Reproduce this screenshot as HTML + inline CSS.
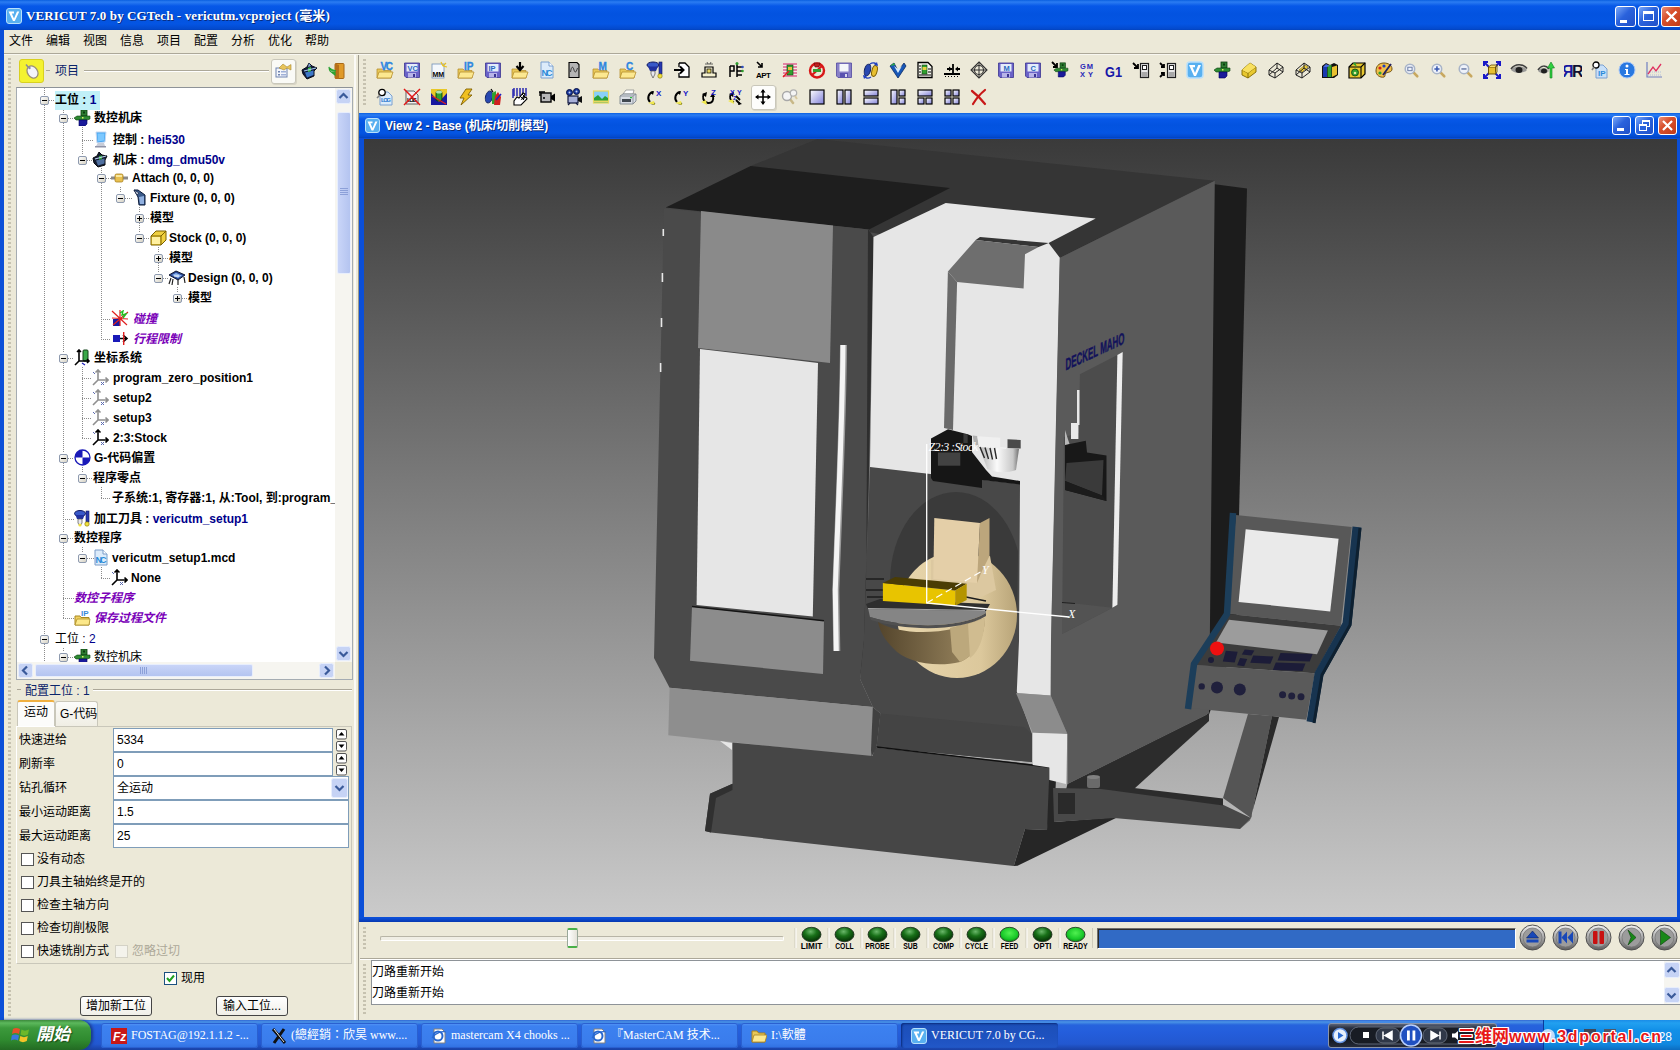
<!DOCTYPE html><html><head><meta charset="utf-8"><title>VERICUT 7.0 by CGTech</title><style>
*{box-sizing:border-box;margin:0;padding:0}
html,body{width:1680px;height:1050px;overflow:hidden;background:#ECE9D8}
body{position:relative;font-family:"Liberation Sans","Noto Sans CJK SC",sans-serif;font-size:12px;color:#000}
.a{position:absolute}
.t{position:absolute;white-space:nowrap;line-height:16px;height:16px}
.b{font-weight:bold}
.navy{color:#00008B}
.pur{color:#7A00B8;font-style:italic;font-weight:bold}
</style></head><body>
<div class="a" style="left:0;top:0;width:1680px;height:30px;background:linear-gradient(#0A5FE0 0,#2B7CF2 2px,#0758E8 6px,#0353E0 14px,#0455E3 24px,#0349CC 29px,#0242BB 30px)"></div>
<div class="a" style="left:0;top:30px;width:4px;height:990px;background:#0B4FD8"></div>
<svg class="a" style="left:6px;top:8px" width="16" height="16" viewBox="0 0 16 16"><rect x=".5" y=".5" width="15" height="15" rx="2.500" fill="#58B0F0" stroke="#B8E0FC"/><path d="M2.500 3.500 H8 V5.500 H5.800 L8 10.500 L11 3.500 H13.300 L8.800 13 H7Z" fill="#fff"/></svg>
<div class="t b" style="left:26px;top:8px;color:#fff;font-family:'Liberation Serif','Noto Sans CJK SC',serif;font-size:13px;letter-spacing:.11px;text-shadow:1px 1px 0 #0A2A7A">VERICUT 7.0 by CGTech - vericutm.vcproject (毫米)</div>
<div class="t" style="left:9px;top:33px">文件</div>
<div class="t" style="left:46px;top:33px">编辑</div>
<div class="t" style="left:83px;top:33px">视图</div>
<div class="t" style="left:120px;top:33px">信息</div>
<div class="t" style="left:157px;top:33px">项目</div>
<div class="t" style="left:194px;top:33px">配置</div>
<div class="t" style="left:231px;top:33px">分析</div>
<div class="t" style="left:268px;top:33px">优化</div>
<div class="t" style="left:305px;top:33px">帮助</div>
<div class="a" style="left:4px;top:53px;width:1676px;height:1px;background:#ACA899"></div>
<div class="a" style="left:4px;top:54px;width:1676px;height:1px;background:#F8F7F0"></div>
<div class="a" style="left:8px;top:58px;width:3px;height:958px;background:repeating-linear-gradient(#C6C2B0 0 2px,transparent 2px 4px)"></div>
<div class="a" style="left:19px;top:59px;width:25px;height:24px;background:#F4F230;border:1px solid #D8D020;border-radius:3px"></div>
<svg class="a" style="left:22px;top:61px" width="20" height="20" viewBox="0 0 20 20"><ellipse cx="10.5" cy="11" rx="5" ry="6.5" transform="rotate(-35 10.5 11)" fill="#F4F4FA" stroke="#9A8F78" stroke-width="1.3"/><path d="M6.5 6.5 L4 3.5" stroke="#8A8A9A" stroke-width="1.5" fill="none"/><circle cx="7.5" cy="7" r="1.2" fill="#8A8AB0"/></svg>
<div class="a" style="left:46px;top:70px;width:4px;height:1px;background:#ACA899"></div>
<div class="t" style="left:55px;top:63px;color:#0A246A">项目</div>
<div class="a" style="left:84px;top:70px;width:185px;height:1px;background:#ACA899"></div>
<div class="a" style="left:84px;top:71px;width:185px;height:1px;background:#fff"></div>
<div class="a" style="left:271px;top:59px;width:25px;height:25px;background:#FAFAF6;border:1px solid #C9C7BA;border-radius:3px;box-shadow:1px 1px 0 #D8D5C5"></div>
<svg class="a" style="left:275px;top:63px" width="18" height="16" viewBox="0 0 18 16"><rect x="1" y="5" width="11" height="9" fill="#F4F6FB" stroke="#6F83B0"/><rect x="3" y="8" width="2" height="1.5" fill="#6F83B0"/><rect x="6" y="8" width="5" height="1.5" fill="#9FB0D8"/><rect x="3" y="11" width="2" height="1.5" fill="#6F83B0"/><rect x="6" y="11" width="5" height="1.5" fill="#9FB0D8"/><path d="M4 5 L8 1 L12 4 L16 1.5 L16 7 L12 5 L9 7Z" fill="#E8C45A" stroke="#A88A30" stroke-width=".6"/></svg>
<svg class="a" style="left:301px;top:62px" width="18" height="18" viewBox="0 0 18 18"><path d="M1 8 L6 5 L8 1 L11 4 L16 6 L13 9 L13 14 L6 17 L2 12Z" fill="#101C3C" stroke="#050A18"/><path d="M4 10.500 L12.500 8.500 L12.500 13 L6 15.500Z" fill="#3E78C8"/><path d="M7 6 L10 5 L10 9 L7 10Z" fill="#3CC040"/><path d="M8 1 L10 4 L7 5Z" fill="#88A8D8"/><path d="M3 9 L15 6" stroke="#A8C8F0" stroke-width="1.2"/></svg>
<svg class="a" style="left:328px;top:62px" width="18" height="18" viewBox="0 0 18 18"><rect x="7" y="1.5" width="9" height="15" rx="1" fill="#E09A28" stroke="#A86818"/><path d="M7 1.5 L11 3 L11 17 L7 16.5Z" fill="#B87018"/><path d="M1 5 C1 10 4 11 7 10 L7 13 L2 9Z M2 6 C3 9 5 9.5 8 8.5" fill="#3CC040" stroke="#28A030" stroke-width="1.2"/></svg>
<div class="a" style="left:16px;top:87px;width:337px;height:593px;background:#fff;border:1px solid #A5ACB2;border-top-color:#8E9398"></div>
<div class="a" style="left:17px;top:88px;width:318px;height:574px;overflow:hidden" id="tree">
<div class="a" style="left:27px;top:0px;width:1px;height:7px;background:repeating-linear-gradient(#8C8C8C 0 1px,transparent 1px 2px)"></div><div class="a" style="left:27px;top:17px;width:1px;height:529px;background:repeating-linear-gradient(#8C8C8C 0 1px,transparent 1px 2px)"></div><div class="a" style="left:27px;top:556px;width:1px;height:18px;background:repeating-linear-gradient(#8C8C8C 0 1px,transparent 1px 2px)"></div><div class="a" style="left:32px;top:12px;width:6px;height:1px;background:repeating-linear-gradient(90deg,#8C8C8C 0 1px,transparent 1px 2px)"></div><div class="a" style="left:46px;top:20px;width:1px;height:5px;background:repeating-linear-gradient(#8C8C8C 0 1px,transparent 1px 2px)"></div><div class="a" style="left:46px;top:35px;width:1px;height:230px;background:repeating-linear-gradient(#8C8C8C 0 1px,transparent 1px 2px)"></div><div class="a" style="left:46px;top:275px;width:1px;height:90px;background:repeating-linear-gradient(#8C8C8C 0 1px,transparent 1px 2px)"></div><div class="a" style="left:46px;top:375px;width:1px;height:70px;background:repeating-linear-gradient(#8C8C8C 0 1px,transparent 1px 2px)"></div><div class="a" style="left:46px;top:455px;width:1px;height:76px;background:repeating-linear-gradient(#8C8C8C 0 1px,transparent 1px 2px)"></div><div class="a" style="left:46px;top:560px;width:1px;height:4px;background:repeating-linear-gradient(#8C8C8C 0 1px,transparent 1px 2px)"></div><div class="a" style="left:51px;top:30px;width:6px;height:1px;background:repeating-linear-gradient(90deg,#8C8C8C 0 1px,transparent 1px 2px)"></div><div class="a" style="left:51px;top:270px;width:6px;height:1px;background:repeating-linear-gradient(90deg,#8C8C8C 0 1px,transparent 1px 2px)"></div><div class="a" style="left:51px;top:370px;width:6px;height:1px;background:repeating-linear-gradient(90deg,#8C8C8C 0 1px,transparent 1px 2px)"></div><div class="a" style="left:51px;top:450px;width:6px;height:1px;background:repeating-linear-gradient(90deg,#8C8C8C 0 1px,transparent 1px 2px)"></div><div class="a" style="left:51px;top:569px;width:6px;height:1px;background:repeating-linear-gradient(90deg,#8C8C8C 0 1px,transparent 1px 2px)"></div><div class="a" style="left:46px;top:431px;width:11px;height:1px;background:repeating-linear-gradient(90deg,#8C8C8C 0 1px,transparent 1px 2px)"></div><div class="a" style="left:46px;top:510px;width:11px;height:1px;background:repeating-linear-gradient(90deg,#8C8C8C 0 1px,transparent 1px 2px)"></div><div class="a" style="left:46px;top:530px;width:11px;height:1px;background:repeating-linear-gradient(90deg,#8C8C8C 0 1px,transparent 1px 2px)"></div><div class="a" style="left:65px;top:39px;width:1px;height:27px;background:repeating-linear-gradient(#8C8C8C 0 1px,transparent 1px 2px)"></div><div class="a" style="left:65px;top:52px;width:11px;height:1px;background:repeating-linear-gradient(90deg,#8C8C8C 0 1px,transparent 1px 2px)"></div><div class="a" style="left:70px;top:72px;width:6px;height:1px;background:repeating-linear-gradient(90deg,#8C8C8C 0 1px,transparent 1px 2px)"></div><div class="a" style="left:84px;top:80px;width:1px;height:5px;background:repeating-linear-gradient(#8C8C8C 0 1px,transparent 1px 2px)"></div><div class="a" style="left:84px;top:95px;width:1px;height:156px;background:repeating-linear-gradient(#8C8C8C 0 1px,transparent 1px 2px)"></div><div class="a" style="left:89px;top:90px;width:5px;height:1px;background:repeating-linear-gradient(90deg,#8C8C8C 0 1px,transparent 1px 2px)"></div><div class="a" style="left:84px;top:231px;width:10px;height:1px;background:repeating-linear-gradient(90deg,#8C8C8C 0 1px,transparent 1px 2px)"></div><div class="a" style="left:84px;top:251px;width:10px;height:1px;background:repeating-linear-gradient(90deg,#8C8C8C 0 1px,transparent 1px 2px)"></div><div class="a" style="left:103px;top:99px;width:1px;height:6px;background:repeating-linear-gradient(#8C8C8C 0 1px,transparent 1px 2px)"></div><div class="a" style="left:108px;top:110px;width:8px;height:1px;background:repeating-linear-gradient(90deg,#8C8C8C 0 1px,transparent 1px 2px)"></div><div class="a" style="left:122px;top:119px;width:1px;height:6px;background:repeating-linear-gradient(#8C8C8C 0 1px,transparent 1px 2px)"></div><div class="a" style="left:122px;top:135px;width:1px;height:10px;background:repeating-linear-gradient(#8C8C8C 0 1px,transparent 1px 2px)"></div><div class="a" style="left:127px;top:130px;width:6px;height:1px;background:repeating-linear-gradient(90deg,#8C8C8C 0 1px,transparent 1px 2px)"></div><div class="a" style="left:127px;top:150px;width:6px;height:1px;background:repeating-linear-gradient(90deg,#8C8C8C 0 1px,transparent 1px 2px)"></div><div class="a" style="left:141px;top:159px;width:1px;height:6px;background:repeating-linear-gradient(#8C8C8C 0 1px,transparent 1px 2px)"></div><div class="a" style="left:141px;top:175px;width:1px;height:10px;background:repeating-linear-gradient(#8C8C8C 0 1px,transparent 1px 2px)"></div><div class="a" style="left:146px;top:170px;width:6px;height:1px;background:repeating-linear-gradient(90deg,#8C8C8C 0 1px,transparent 1px 2px)"></div><div class="a" style="left:146px;top:190px;width:5px;height:1px;background:repeating-linear-gradient(90deg,#8C8C8C 0 1px,transparent 1px 2px)"></div><div class="a" style="left:160px;top:199px;width:1px;height:6px;background:repeating-linear-gradient(#8C8C8C 0 1px,transparent 1px 2px)"></div><div class="a" style="left:165px;top:210px;width:6px;height:1px;background:repeating-linear-gradient(90deg,#8C8C8C 0 1px,transparent 1px 2px)"></div><div class="a" style="left:65px;top:279px;width:1px;height:72px;background:repeating-linear-gradient(#8C8C8C 0 1px,transparent 1px 2px)"></div><div class="a" style="left:65px;top:290px;width:10px;height:1px;background:repeating-linear-gradient(90deg,#8C8C8C 0 1px,transparent 1px 2px)"></div><div class="a" style="left:65px;top:310px;width:10px;height:1px;background:repeating-linear-gradient(90deg,#8C8C8C 0 1px,transparent 1px 2px)"></div><div class="a" style="left:65px;top:330px;width:10px;height:1px;background:repeating-linear-gradient(90deg,#8C8C8C 0 1px,transparent 1px 2px)"></div><div class="a" style="left:65px;top:350px;width:10px;height:1px;background:repeating-linear-gradient(90deg,#8C8C8C 0 1px,transparent 1px 2px)"></div><div class="a" style="left:65px;top:379px;width:1px;height:6px;background:repeating-linear-gradient(#8C8C8C 0 1px,transparent 1px 2px)"></div><div class="a" style="left:70px;top:390px;width:6px;height:1px;background:repeating-linear-gradient(90deg,#8C8C8C 0 1px,transparent 1px 2px)"></div><div class="a" style="left:84px;top:399px;width:1px;height:12px;background:repeating-linear-gradient(#8C8C8C 0 1px,transparent 1px 2px)"></div><div class="a" style="left:84px;top:410px;width:10px;height:1px;background:repeating-linear-gradient(90deg,#8C8C8C 0 1px,transparent 1px 2px)"></div><div class="a" style="left:65px;top:459px;width:1px;height:6px;background:repeating-linear-gradient(#8C8C8C 0 1px,transparent 1px 2px)"></div><div class="a" style="left:70px;top:470px;width:7px;height:1px;background:repeating-linear-gradient(90deg,#8C8C8C 0 1px,transparent 1px 2px)"></div><div class="a" style="left:84px;top:479px;width:1px;height:12px;background:repeating-linear-gradient(#8C8C8C 0 1px,transparent 1px 2px)"></div><div class="a" style="left:84px;top:490px;width:10px;height:1px;background:repeating-linear-gradient(90deg,#8C8C8C 0 1px,transparent 1px 2px)"></div>
<div class="a" style="left:38px;top:3px;width:45px;height:19px;background:#C0F0F8"></div>
<div class="a" style="left:23px;top:8px;width:9px;height:9px;border:1px solid #8E9AAF;border-radius:2px;background:linear-gradient(135deg,#fff,#D6D2C4)"></div><div class="a" style="left:25px;top:12px;width:5px;height:1px;background:#000"></div>
<div class="t" style="left:38px;top:4px"><span class="b">工位 : <span class="navy">1</span></span></div>
<div class="a" style="left:42px;top:26px;width:9px;height:9px;border:1px solid #8E9AAF;border-radius:2px;background:linear-gradient(135deg,#fff,#D6D2C4)"></div><div class="a" style="left:44px;top:30px;width:5px;height:1px;background:#000"></div>
<div class="a" style="left:57px;top:22px;line-height:0"><svg width="17" height="16" viewBox="0 0 17 16"><rect x="7" y="0" width="6" height="6" fill="#2E7D32" stroke="#0B3D0E" stroke-width=".8"/><rect x="9" y="1.5" width="2" height="2" fill="#0B3D0E"/><path d="M0 8 L3 6 L16 6 L16 9 L13 10 L2 10Z" fill="#2E8B32" stroke="#0B3D0E" stroke-width=".6"/><rect x="8" y="7" width="1.5" height="1.5" fill="#D8F060"/><path d="M5 10 L13 10 L13 14 L11 16 L5 16Z" fill="#1A1A9A" stroke="#000060" stroke-width=".6"/></svg></div>
<div class="t" style="left:77px;top:22px"><span class="b">数控机床</span></div>
<div class="a" style="left:76px;top:43px;line-height:0"><svg width="15" height="17" viewBox="0 0 15 17"><path d="M3 1 L13 1 L12 11 L4 12Z" fill="#4AA8F0" stroke="#C8D8F0" stroke-width="1"/><path d="M4.5 2.5 L11.5 2.5 L11 9.5 L5 10.5Z" fill="#7CC8FF"/><path d="M5 12 L11 12 L12 15 L3 15Z" fill="#C8CCD8"/><rect x="2" y="15" width="11" height="1.5" fill="#9094A8"/></svg></div>
<div class="t" style="left:96px;top:44px"><span class="b">控制 : <span class="navy">hei530</span></span></div>
<div class="a" style="left:61px;top:68px;width:9px;height:9px;border:1px solid #8E9AAF;border-radius:2px;background:linear-gradient(135deg,#fff,#D6D2C4)"></div><div class="a" style="left:63px;top:72px;width:5px;height:1px;background:#000"></div>
<div class="a" style="left:75px;top:63px;line-height:0"><svg width="17" height="17" viewBox="0 0 17 17"><path d="M1 7 L5 5 L7 1 L10 4 L15 5 L13 9 L13 14 L6 16 L2 12Z" fill="#141C30" stroke="#05080F"/><path d="M4 9.500 L12.500 7.500 L12.500 12.500 L6 14.500Z" fill="#5070A0"/><path d="M7 5 L10 4.5 L10 8 L7 9Z" fill="#30A038"/><path d="M3 8 L14 5" stroke="#B8D0F0" stroke-width="1.2"/></svg></div>
<div class="t" style="left:96px;top:64px"><span class="b">机床 : <span class="navy">dmg_dmu50v</span></span></div>
<div class="a" style="left:80px;top:86px;width:9px;height:9px;border:1px solid #8E9AAF;border-radius:2px;background:linear-gradient(135deg,#fff,#D6D2C4)"></div><div class="a" style="left:82px;top:90px;width:5px;height:1px;background:#000"></div>
<div class="a" style="left:94px;top:85px;line-height:0"><svg width="17" height="10" viewBox="0 0 17 10"><rect x="0" y="3.5" width="17" height="3" fill="#8A8A8A"/><rect x="4" y="1" width="8" height="8" rx="1.5" fill="#E8C050" stroke="#A88020" stroke-width=".8"/><rect x="5" y="2" width="6" height="2" fill="#F8E8A0"/></svg></div>
<div class="t" style="left:115px;top:82px"><span class="b">Attach (0, 0, 0)</span></div>
<div class="a" style="left:99px;top:106px;width:9px;height:9px;border:1px solid #8E9AAF;border-radius:2px;background:linear-gradient(135deg,#fff,#D6D2C4)"></div><div class="a" style="left:101px;top:110px;width:5px;height:1px;background:#000"></div>
<div class="a" style="left:116px;top:101px;line-height:0"><svg width="14" height="17" viewBox="0 0 14 17"><path d="M1 1 L5 1 L12 6 L12 16 L6 16 L5 8Z" fill="#3A5A8A" stroke="#0A1A3A"/><path d="M6 8 L11 7 L11 15 L7 15Z" fill="#90B0E0"/><path d="M1 1 L4 6 L6 4Z" fill="#C0C8D8" stroke="#0A1A3A" stroke-width=".6"/></svg></div>
<div class="t" style="left:133px;top:102px"><span class="b">Fixture (0, 0, 0)</span></div>
<div class="a" style="left:118px;top:126px;width:9px;height:9px;border:1px solid #8E9AAF;border-radius:2px;background:linear-gradient(135deg,#fff,#D6D2C4)"></div><div class="a" style="left:120px;top:130px;width:5px;height:1px;background:#000"></div><div class="a" style="left:122px;top:128px;width:1px;height:5px;background:#000"></div>
<div class="t" style="left:133px;top:122px"><span class="b">模型</span></div>
<div class="a" style="left:118px;top:146px;width:9px;height:9px;border:1px solid #8E9AAF;border-radius:2px;background:linear-gradient(135deg,#fff,#D6D2C4)"></div><div class="a" style="left:120px;top:150px;width:5px;height:1px;background:#000"></div>
<div class="a" style="left:133px;top:142px;line-height:0"><svg width="17" height="16" viewBox="0 0 17 16"><path d="M1 6 L6 1 L16 1 L16 10 L11 15 L1 15Z" fill="#F0D040" stroke="#7A6000"/><path d="M1 6 L11 6 L16 1 M11 6 L11 15" fill="none" stroke="#7A6000"/><path d="M2 7 L10 7 L10 14 L2 14Z" fill="#FFF0A0"/></svg></div>
<div class="t" style="left:152px;top:142px"><span class="b">Stock (0, 0, 0)</span></div>
<div class="a" style="left:137px;top:166px;width:9px;height:9px;border:1px solid #8E9AAF;border-radius:2px;background:linear-gradient(135deg,#fff,#D6D2C4)"></div><div class="a" style="left:139px;top:170px;width:5px;height:1px;background:#000"></div><div class="a" style="left:141px;top:168px;width:1px;height:5px;background:#000"></div>
<div class="t" style="left:152px;top:162px"><span class="b">模型</span></div>
<div class="a" style="left:137px;top:186px;width:9px;height:9px;border:1px solid #8E9AAF;border-radius:2px;background:linear-gradient(135deg,#fff,#D6D2C4)"></div><div class="a" style="left:139px;top:190px;width:5px;height:1px;background:#000"></div>
<div class="a" style="left:151px;top:182px;line-height:0"><svg width="18" height="16" viewBox="0 0 18 16"><path d="M1 5 L8 1 L17 5 L10 10Z" fill="#2A4A9A" stroke="#101830"/><path d="M4 5 L8 3 L14 5.5 L10 8Z" fill="#90B8F0"/><path d="M3 8 L1 14 M10 10 L10 15 M16 7 L17 13 M5 9 L4 15" stroke="#202020" stroke-width="1.2" fill="none"/><path d="M6 6 L11 6" stroke="#fff" stroke-width="1"/></svg></div>
<div class="t" style="left:171px;top:182px"><span class="b">Design (0, 0, 0)</span></div>
<div class="a" style="left:156px;top:206px;width:9px;height:9px;border:1px solid #8E9AAF;border-radius:2px;background:linear-gradient(135deg,#fff,#D6D2C4)"></div><div class="a" style="left:158px;top:210px;width:5px;height:1px;background:#000"></div><div class="a" style="left:160px;top:208px;width:1px;height:5px;background:#000"></div>
<div class="t" style="left:171px;top:202px"><span class="b">模型</span></div>
<div class="a" style="left:94px;top:222px;line-height:0"><svg width="18" height="17" viewBox="0 0 18 17"><rect x="2" y="9" width="7" height="7" fill="#1A1AA0"/><path d="M1 1 L16 15 M9 0 L9 16 M17 2 L2 15 M1 8 L17 9" stroke="#E02020" stroke-width="1.2"/><path d="M9 3 L12 1 L11 5 L15 4 L12 8" stroke="#20C020" stroke-width="1.4" fill="none"/></svg></div>
<div class="t" style="left:116px;top:223px"><span class="pur">碰撞</span></div>
<div class="a" style="left:95px;top:244px;line-height:0"><svg width="17" height="13" viewBox="0 0 17 13"><rect x="1" y="3" width="7" height="7" fill="#1A1AB8"/><path d="M8 6.5 L15 6.5 M11 3 L15 6.5 L11 10" stroke="#000" stroke-width="1.6" fill="none"/><rect x="11" y="0" width="1.4" height="13" fill="#E02020"/></svg></div>
<div class="t" style="left:116px;top:243px"><span class="pur">行程限制</span></div>
<div class="a" style="left:42px;top:266px;width:9px;height:9px;border:1px solid #8E9AAF;border-radius:2px;background:linear-gradient(135deg,#fff,#D6D2C4)"></div><div class="a" style="left:44px;top:270px;width:5px;height:1px;background:#000"></div>
<div class="a" style="left:57px;top:261px;line-height:0"><svg width="17" height="17" viewBox="0 0 17 17"><rect x="9" y="1" width="5" height="11" rx="1" fill="#38A848" stroke="#104018"/><path d="M5 1 L5 12 L15 12 M3 3 L5 1 L7 3 M13 10 L15 12 L13 14 M5 12 L1 16" stroke="#000" stroke-width="1.6" fill="none"/><path d="M8 14 L11 16" stroke="#1A1AB8" stroke-width="1.2"/></svg></div>
<div class="t" style="left:77px;top:262px"><span class="b">坐标系统</span></div>
<div class="a" style="left:75px;top:281px;line-height:0"><svg width="17" height="17" viewBox="0 0 17 17"><path d="M6 1 L6 11 L16 11 M3.5 3.5 L6 1 L8.5 3.5 M13.5 8.5 L16 11 L13.5 13.5 M6 11 L1 16" stroke="#909090" stroke-width="1.6" fill="none"/><path d="M9 13 L12 16 M12 13 L9 16" stroke="#5A6AB0" stroke-width="1"/><path d="M1 3 L3 5" stroke="#5A6AB0" stroke-width="1"/></svg></div>
<div class="t" style="left:96px;top:282px"><span class="b">program_zero_position1</span></div>
<div class="a" style="left:75px;top:301px;line-height:0"><svg width="17" height="17" viewBox="0 0 17 17"><path d="M6 1 L6 11 L16 11 M3.5 3.5 L6 1 L8.5 3.5 M13.5 8.5 L16 11 L13.5 13.5 M6 11 L1 16" stroke="#909090" stroke-width="1.6" fill="none"/><path d="M9 13 L12 16 M12 13 L9 16" stroke="#5A6AB0" stroke-width="1"/><path d="M1 3 L3 5" stroke="#5A6AB0" stroke-width="1"/></svg></div>
<div class="t" style="left:96px;top:302px"><span class="b">setup2</span></div>
<div class="a" style="left:75px;top:321px;line-height:0"><svg width="17" height="17" viewBox="0 0 17 17"><path d="M6 1 L6 11 L16 11 M3.5 3.5 L6 1 L8.5 3.5 M13.5 8.5 L16 11 L13.5 13.5 M6 11 L1 16" stroke="#909090" stroke-width="1.6" fill="none"/><path d="M9 13 L12 16 M12 13 L9 16" stroke="#5A6AB0" stroke-width="1"/><path d="M1 3 L3 5" stroke="#5A6AB0" stroke-width="1"/></svg></div>
<div class="t" style="left:96px;top:322px"><span class="b">setup3</span></div>
<div class="a" style="left:75px;top:341px;line-height:0"><svg width="17" height="17" viewBox="0 0 17 17"><path d="M6 1 L6 11 L16 11 M3.5 3.5 L6 1 L8.5 3.5 M13.5 8.5 L16 11 L13.5 13.5 M6 11 L1 16" stroke="#000" stroke-width="1.6" fill="none"/><path d="M9 13 L12 16 M12 13 L9 16" stroke="#5A6AB0" stroke-width="1"/><path d="M1 3 L3 5" stroke="#5A6AB0" stroke-width="1"/></svg></div>
<div class="t" style="left:96px;top:342px"><span class="b">2:3:Stock</span></div>
<div class="a" style="left:42px;top:366px;width:9px;height:9px;border:1px solid #8E9AAF;border-radius:2px;background:linear-gradient(135deg,#fff,#D6D2C4)"></div><div class="a" style="left:44px;top:370px;width:5px;height:1px;background:#000"></div>
<div class="a" style="left:57px;top:361px;line-height:0"><svg width="17" height="17" viewBox="0 0 17 17"><circle cx="8.5" cy="8.5" r="7.5" fill="#fff" stroke="#1A1AB8" stroke-width="1.3"/><path d="M8.5 1 A7.5 7.5 0 0 0 1 8.5 L8.5 8.5Z" fill="#1A1AB8"/><path d="M8.5 16 A7.5 7.5 0 0 0 16 8.5 L8.5 8.5Z" fill="#1A1AB8"/></svg></div>
<div class="t" style="left:77px;top:362px"><span class="b">G-代码偏置</span></div>
<div class="a" style="left:61px;top:386px;width:9px;height:9px;border:1px solid #8E9AAF;border-radius:2px;background:linear-gradient(135deg,#fff,#D6D2C4)"></div><div class="a" style="left:63px;top:390px;width:5px;height:1px;background:#000"></div>
<div class="t" style="left:76px;top:382px"><span class="b">程序零点</span></div>
<div class="t" style="left:95px;top:402px"><span class="b">子系统:1, 寄存器:1, 从:Tool, 到:program_zero_position1</span></div>
<div class="a" style="left:57px;top:422px;line-height:0"><svg width="17" height="17" viewBox="0 0 17 17"><ellipse cx="6" cy="3.5" rx="5.5" ry="3" fill="#3858C8" stroke="#101860"/><path d="M1.5 5 L3 9 L9 9 L10.5 5Z" fill="#2030A0"/><path d="M4 9 L4 13 L6 16 L8 13 L8 9Z" fill="#E8E8F0" stroke="#505050" stroke-width=".7"/><rect x="12" y="1" width="3" height="11" fill="#2838B0" stroke="#101860" stroke-width=".6"/><circle cx="13" cy="14" r="2.2" fill="#F0E040" stroke="#807000" stroke-width=".6"/><circle cx="6" cy="15" r="1.6" fill="#F0E040"/></svg></div>
<div class="t" style="left:77px;top:423px"><span class="b">加工刀具 : <span class="navy">vericutm_setup1</span></span></div>
<div class="a" style="left:42px;top:446px;width:9px;height:9px;border:1px solid #8E9AAF;border-radius:2px;background:linear-gradient(135deg,#fff,#D6D2C4)"></div><div class="a" style="left:44px;top:450px;width:5px;height:1px;background:#000"></div>
<div class="t" style="left:57px;top:442px"><span class="b">数控程序</span></div>
<div class="a" style="left:61px;top:466px;width:9px;height:9px;border:1px solid #8E9AAF;border-radius:2px;background:linear-gradient(135deg,#fff,#D6D2C4)"></div><div class="a" style="left:63px;top:470px;width:5px;height:1px;background:#000"></div>
<div class="a" style="left:77px;top:461px;line-height:0"><svg width="14" height="17" viewBox="0 0 14 17"><path d="M1 1 L9 1 L13 5 L13 16 L1 16Z" fill="#DCEBFA" stroke="#7A9CC8"/><path d="M9 1 L9 5 L13 5" fill="#fff" stroke="#7A9CC8"/><text x="1.5" y="14" font-family="Liberation Sans" font-weight="bold" font-size="9" fill="#2A8AD8" textLength="11">NC</text></svg></div>
<div class="t" style="left:95px;top:462px"><span class="b">vericutm_setup1.mcd</span></div>
<div class="a" style="left:94px;top:481px;line-height:0"><svg width="17" height="17" viewBox="0 0 17 17"><path d="M6 1 L6 11 L16 11 M3.5 3.5 L6 1 L8.5 3.5 M13.5 8.5 L16 11 L13.5 13.5 M6 11 L1 16" stroke="#000" stroke-width="1.6" fill="none"/><path d="M9 13 L12 16 M12 13 L9 16" stroke="#5A6AB0" stroke-width="1"/><path d="M1 3 L3 5" stroke="#5A6AB0" stroke-width="1"/></svg></div>
<div class="t" style="left:114px;top:482px"><span class="b">None</span></div>
<div class="t" style="left:57px;top:502px"><span class="pur">数控子程序</span></div>
<div class="a" style="left:57px;top:521px;line-height:0"><svg width="17" height="17" viewBox="0 0 17 17"><path d="M1 7 L6 7 L7 8.5 L15 8.5 L15 16 L1 16Z" fill="#F0D060" stroke="#A88820"/><path d="M1 16 L3 10 L16 10 L15 16Z" fill="#FCE88A" stroke="#A88820" stroke-width=".7"/><text x="7" y="7" font-family="Liberation Sans" font-weight="bold" font-size="8" fill="#3A8AD8">IP</text></svg></div>
<div class="t" style="left:77px;top:522px"><span class="pur">保存过程文件</span></div>
<div class="a" style="left:23px;top:547px;width:9px;height:9px;border:1px solid #8E9AAF;border-radius:2px;background:linear-gradient(135deg,#fff,#D6D2C4)"></div><div class="a" style="left:25px;top:551px;width:5px;height:1px;background:#000"></div>
<div class="t" style="left:38px;top:543px">工位 : <span class="navy">2</span></div>
<div class="a" style="left:42px;top:565px;width:9px;height:9px;border:1px solid #8E9AAF;border-radius:2px;background:linear-gradient(135deg,#fff,#D6D2C4)"></div><div class="a" style="left:44px;top:569px;width:5px;height:1px;background:#000"></div>
<div class="a" style="left:57px;top:561px;line-height:0"><svg width="17" height="16" viewBox="0 0 17 16"><rect x="7" y="0" width="6" height="6" fill="#2E7D32" stroke="#0B3D0E" stroke-width=".8"/><rect x="9" y="1.5" width="2" height="2" fill="#0B3D0E"/><path d="M0 8 L3 6 L16 6 L16 9 L13 10 L2 10Z" fill="#2E8B32" stroke="#0B3D0E" stroke-width=".6"/><rect x="8" y="7" width="1.5" height="1.5" fill="#D8F060"/><path d="M5 10 L13 10 L13 14 L11 16 L5 16Z" fill="#1A1A9A" stroke="#000060" stroke-width=".6"/></svg></div>
<div class="t" style="left:77px;top:561px">数控机床</div>
</div>
<div class="a" style="left:335px;top:88px;width:17px;height:574px;background:#F6F5F0"></div>
<svg class="a" style="left:335px;top:88px" width="17" height="17" viewBox="0 0 17 17"><rect x="1.5" y="1.5" width="14" height="14" rx="2" fill="#C6D3F5" stroke="#E8EEFC"/><path d="M4.5 10 L8.5 6 L12.5 10" fill="none" stroke="#3A5A9A" stroke-width="2.2"/></svg>
<svg class="a" style="left:335px;top:645px" width="17" height="17" viewBox="0 0 17 17"><rect x="1.5" y="1.5" width="14" height="14" rx="2" fill="#C6D3F5" stroke="#E8EEFC"/><path d="M4.5 7 L8.5 11 L12.5 7" fill="none" stroke="#3A5A9A" stroke-width="2.2"/></svg>
<div class="a" style="left:337px;top:112px;width:14px;height:162px;background:linear-gradient(90deg,#C9D5F8,#B4C4F0);border:1px solid #E8EEFC;border-radius:2px"></div>
<div class="a" style="left:340px;top:188px;width:8px;height:7px;background:repeating-linear-gradient(#8CA0D8 0 1px,transparent 1px 2px)"></div>
<div class="a" style="left:17px;top:662px;width:335px;height:17px;background:#F6F5F0"></div>
<svg class="a" style="left:17px;top:662px" width="17" height="17" viewBox="0 0 17 17"><rect x="1.5" y="1.5" width="14" height="14" rx="2" fill="#C6D3F5" stroke="#E8EEFC"/><path d="M10 4.5 L6 8.5 L10 12.5" fill="none" stroke="#3A5A9A" stroke-width="2.2"/></svg>
<svg class="a" style="left:318px;top:662px" width="17" height="17" viewBox="0 0 17 17"><rect x="1.5" y="1.5" width="14" height="14" rx="2" fill="#C6D3F5" stroke="#E8EEFC"/><path d="M7 4.5 L11 8.5 L7 12.5" fill="none" stroke="#3A5A9A" stroke-width="2.2"/></svg>
<div class="a" style="left:35px;top:664px;width:218px;height:13px;background:linear-gradient(#C9D5F8,#B4C4F0);border:1px solid #E8EEFC;border-radius:2px"></div>
<div class="a" style="left:140px;top:667px;width:8px;height:7px;background:repeating-linear-gradient(90deg,#8CA0D8 0 1px,transparent 1px 2px)"></div>
<div class="a" style="left:335px;top:662px;width:17px;height:17px;background:#ECE9D8"></div>
<div class="a" style="left:17px;top:689px;width:4px;height:1px;background:#ACA899"></div>
<div class="t" style="left:25px;top:683px;color:#0A246A">配置工位 : 1</div>
<div class="a" style="left:93px;top:689px;width:259px;height:1px;background:#ACA899"></div><div class="a" style="left:93px;top:690px;width:259px;height:1px;background:#fff"></div>
<div class="a" style="left:55px;top:701px;width:43px;height:25px;background:linear-gradient(#FCFCFA,#F0EEE4);border:1px solid #C9C7BA;border-bottom:none;border-radius:3px 3px 0 0"></div>
<div class="t" style="left:60px;top:706px">G-代码</div>
<div class="a" style="left:17px;top:700px;width:38px;height:27px;background:#FCFCFA;border:1px solid #C9C7BA;border-top:2px solid #F0B040;border-bottom:none;border-radius:3px 3px 0 0"></div>
<div class="t" style="left:24px;top:704px">运动</div>
<div class="a" style="left:16px;top:726px;width:336px;height:238px;border:1px solid #C9C7BA;border-top-color:#fff;border-left-color:#fff;box-shadow:0 0 0 0 #000"></div>
<div class="a" style="left:55px;top:726px;width:297px;height:1px;background:#C9C7BA"></div>
<div class="t" style="left:19px;top:732px">快速进给</div>
<div class="a" style="left:113px;top:728px;width:220px;height:24px;background:#fff;border:1px solid #7F9DB9"></div>
<div class="t" style="left:117px;top:732px">5334</div>
<svg class="a" style="left:336px;top:729px" width="12" height="11" viewBox="0 0 12 11"><rect x=".5" y=".5" width="10" height="9.5" rx="1.5" fill="#fff" stroke="#555"/><path d="M2.5 6.5 L5.5 3 L8.5 6.5Z" fill="#000"/></svg>
<svg class="a" style="left:336px;top:741px" width="12" height="11" viewBox="0 0 12 11"><rect x=".5" y=".5" width="10" height="9.5" rx="1.5" fill="#fff" stroke="#555"/><path d="M2.5 3.5 L5.5 7 L8.5 3.5Z" fill="#000"/></svg>
<div class="t" style="left:19px;top:756px">刷新率</div>
<div class="a" style="left:113px;top:752px;width:220px;height:24px;background:#fff;border:1px solid #7F9DB9"></div>
<div class="t" style="left:117px;top:756px">0</div>
<svg class="a" style="left:336px;top:753px" width="12" height="11" viewBox="0 0 12 11"><rect x=".5" y=".5" width="10" height="9.5" rx="1.5" fill="#fff" stroke="#555"/><path d="M2.5 6.5 L5.5 3 L8.5 6.5Z" fill="#000"/></svg>
<svg class="a" style="left:336px;top:765px" width="12" height="11" viewBox="0 0 12 11"><rect x=".5" y=".5" width="10" height="9.5" rx="1.5" fill="#fff" stroke="#555"/><path d="M2.5 3.5 L5.5 7 L8.5 3.5Z" fill="#000"/></svg>
<div class="t" style="left:19px;top:780px">钻孔循环</div>
<div class="a" style="left:113px;top:776px;width:236px;height:24px;background:#fff;border:1px solid #7F9DB9"></div>
<div class="t" style="left:117px;top:780px">全运动</div>
<svg class="a" style="left:331px;top:778px" width="17" height="20" viewBox="0 0 17 20"><rect x=".5" y=".5" width="16" height="19" rx="2" fill="#C6D3F5" stroke="#E8EEFC"/><path d="M4.5 8 L8.5 12 L12.5 8" fill="none" stroke="#3A5A9A" stroke-width="2.2"/></svg>
<div class="t" style="left:19px;top:804px">最小运动距离</div>
<div class="a" style="left:113px;top:800px;width:236px;height:24px;background:#fff;border:1px solid #7F9DB9"></div>
<div class="t" style="left:117px;top:804px">1.5</div>
<div class="t" style="left:19px;top:828px">最大运动距离</div>
<div class="a" style="left:113px;top:824px;width:236px;height:24px;background:#fff;border:1px solid #7F9DB9"></div>
<div class="t" style="left:117px;top:828px">25</div>
<div class="a" style="left:21px;top:853px;width:13px;height:13px;background:#fff;border:1px solid #555"></div>
<div class="t" style="left:37px;top:851px">没有动态</div>
<div class="a" style="left:21px;top:876px;width:13px;height:13px;background:#fff;border:1px solid #555"></div>
<div class="t" style="left:37px;top:874px">刀具主轴始终是开的</div>
<div class="a" style="left:21px;top:899px;width:13px;height:13px;background:#fff;border:1px solid #555"></div>
<div class="t" style="left:37px;top:897px">检查主轴方向</div>
<div class="a" style="left:21px;top:922px;width:13px;height:13px;background:#fff;border:1px solid #555"></div>
<div class="t" style="left:37px;top:920px">检查切削极限</div>
<div class="a" style="left:21px;top:945px;width:13px;height:13px;background:#fff;border:1px solid #555"></div>
<div class="t" style="left:37px;top:943px">快速铣削方式</div>
<div class="a" style="left:115px;top:945px;width:13px;height:13px;background:#F4F3EC;border:1px solid #D4D2C6"></div>
<div class="t" style="left:132px;top:943px;color:#ACA899">忽略过切</div>
<div class="a" style="left:164px;top:972px;width:13px;height:13px;background:#fff;border:1px solid #1C5180"></div>
<svg class="a" style="left:165px;top:973px" width="11" height="11" viewBox="0 0 11 11"><path d="M2 5 L4.5 8 L9 2.5" fill="none" stroke="#21A121" stroke-width="2"/></svg>
<div class="t" style="left:181px;top:970px">现用</div>
<div class="a" style="left:80px;top:996px;width:72px;height:20px;background:linear-gradient(#fff,#F0EFE8);border:1px solid #444;border-radius:3px;text-align:center;line-height:18px;white-space:nowrap">增加新工位</div>
<div class="a" style="left:216px;top:996px;width:72px;height:20px;background:linear-gradient(#fff,#F0EFE8);border:1px solid #444;border-radius:3px;text-align:center;line-height:18px;white-space:nowrap">输入工位...</div>
<div class="a" style="left:354px;top:55px;width:2px;height:965px;background:#FBFAF6"></div>
<div class="a" style="left:358px;top:55px;width:1px;height:965px;background:#9D9A8C"></div>
<div class="a" style="left:363px;top:59px;width:3px;height:48px;background:repeating-linear-gradient(#C6C2B0 0 2px,transparent 2px 4px)"></div>
<div class="a" style="left:751px;top:85px;width:25px;height:25px;background:#FDFDFB;border:1px solid #C9C7BA;border-radius:3px;box-shadow:1px 1px 0 #D8D5C5"></div>
<div class="a" style="left:376px;top:61px;line-height:0"><svg width="18" height="18" viewBox="0 0 18 18"><path d="M1 8 L6 8 L7.5 9.5 L15 9.5 L15 17 L1 17Z" fill="#E8C858" stroke="#B89030" stroke-width=".8"/><path d="M1 17 L3 11 L17 11 L15 17Z" fill="#FCE890" stroke="#B89030" stroke-width=".8"/><text x="4.5" y="8.5" font-family="Liberation Sans" font-weight="bold" font-size="10" fill="#2E86E0" stroke="#2E86E0" stroke-width=".3" textLength="12.5">VC</text></svg></div>
<div class="a" style="left:403px;top:61px;line-height:0"><svg width="18" height="18" viewBox="0 0 18 18"><path d="M1.5 2 L16.5 2 L16.5 16.5 L3 16.5 L1.5 15Z" fill="#6A62C8" stroke="#3A3490" stroke-width=".8"/><rect x="3.5" y="3" width="11" height="7.5" fill="#E4ECFA"/><rect x="5" y="12" width="8" height="4.5" fill="#B8B4E8"/><rect x="10" y="13" width="2" height="3" fill="#3A3490"/><text x="4.5" y="9.5" font-family="Liberation Sans" font-weight="bold" font-size="7.5" fill="#2A6AC0" >VC</text></svg></div>
<div class="a" style="left:430px;top:61px;line-height:0"><svg width="18" height="18" viewBox="0 0 18 18"><rect x="2" y="3" width="12" height="14" fill="#F4F8FC" stroke="#7090B8" stroke-width=".8"/><path d="M11 1 L13 5 M16 2 L13 5 M17 6 L13 5" stroke="#E8C020" stroke-width="1.2"/><text x="2.5" y="15.5" font-family="Liberation Sans" font-weight="bold" font-size="7" fill="#000" >MM</text></svg></div>
<div class="a" style="left:457px;top:61px;line-height:0"><svg width="18" height="18" viewBox="0 0 18 18"><path d="M1 8 L6 8 L7.5 9.5 L15 9.5 L15 17 L1 17Z" fill="#E8C858" stroke="#B89030" stroke-width=".8"/><path d="M1 17 L3 11 L17 11 L15 17Z" fill="#FCE890" stroke="#B89030" stroke-width=".8"/><text x="7" y="8.5" font-family="Liberation Sans" font-weight="bold" font-size="10" fill="#2E86E0" stroke="#2E86E0" stroke-width=".3">IP</text></svg></div>
<div class="a" style="left:484px;top:61px;line-height:0"><svg width="18" height="18" viewBox="0 0 18 18"><path d="M1.5 2 L16.5 2 L16.5 16.5 L3 16.5 L1.5 15Z" fill="#6A62C8" stroke="#3A3490" stroke-width=".8"/><rect x="3.5" y="3" width="11" height="7.5" fill="#E4ECFA"/><rect x="5" y="12" width="8" height="4.5" fill="#B8B4E8"/><rect x="10" y="13" width="2" height="3" fill="#3A3490"/><text x="4.5" y="9.5" font-family="Liberation Sans" font-weight="bold" font-size="7.5" fill="#2A6AC0" >IP</text></svg></div>
<div class="a" style="left:511px;top:61px;line-height:0"><svg width="18" height="18" viewBox="0 0 18 18"><path d="M1 8 L6 8 L7.5 9.5 L15 9.5 L15 17 L1 17Z" fill="#E8C858" stroke="#B89030" stroke-width=".8"/><path d="M1 17 L3 11 L17 11 L15 17Z" fill="#FCE890" stroke="#B89030" stroke-width=".8"/><path d="M9 1 L9 8 M5.5 5 L9 9 L12.5 5" stroke="#000" stroke-width="2.2" fill="none"/></svg></div>
<div class="a" style="left:538px;top:61px;line-height:0"><svg width="18" height="18" viewBox="0 0 18 18"><path d="M3 1 L11 1 L15 5 L15 17 L3 17Z" fill="#DCEBFA" stroke="#7AA0D0"/><path d="M11 1 L11 5 L15 5" fill="#fff" stroke="#7AA0D0"/><text x="3.5" y="14.5" font-family="Liberation Sans" font-weight="bold" font-size="9" fill="#2A8AD8" textLength="11">NC</text></svg></div>
<div class="a" style="left:565px;top:61px;line-height:0"><svg width="18" height="18" viewBox="0 0 18 18"><path d="M4 1.5 L12 1.5 L14 3.5 L14 16.5 L4 16.5Z" fill="#B4B4B4" stroke="#000" stroke-width="1.1"/><path d="M5.5 11 C6.5 5 8 5 9 9 C10 12 11 12 12.5 7" fill="none" stroke="#303030" stroke-width=".9"/></svg></div>
<div class="a" style="left:592px;top:61px;line-height:0"><svg width="18" height="18" viewBox="0 0 18 18"><path d="M1 8 L6 8 L7.5 9.5 L15 9.5 L15 17 L1 17Z" fill="#E8C858" stroke="#B89030" stroke-width=".8"/><path d="M1 17 L3 11 L17 11 L15 17Z" fill="#FCE890" stroke="#B89030" stroke-width=".8"/><text x="6.5" y="8.5" font-family="Liberation Sans" font-weight="bold" font-size="10" fill="#2E86E0" stroke="#2E86E0" stroke-width=".3">M</text></svg></div>
<div class="a" style="left:619px;top:61px;line-height:0"><svg width="18" height="18" viewBox="0 0 18 18"><path d="M1 8 L6 8 L7.5 9.5 L15 9.5 L15 17 L1 17Z" fill="#E8C858" stroke="#B89030" stroke-width=".8"/><path d="M1 17 L3 11 L17 11 L15 17Z" fill="#FCE890" stroke="#B89030" stroke-width=".8"/><text x="7" y="8.5" font-family="Liberation Sans" font-weight="bold" font-size="10" fill="#2E86E0" stroke="#2E86E0" stroke-width=".3">C</text></svg></div>
<div class="a" style="left:646px;top:61px;line-height:0"><svg width="18" height="18" viewBox="0 0 18 18"><ellipse cx="7" cy="4" rx="6" ry="3" fill="#3858C8" stroke="#101860"/><path d="M2 5.5 L4 10 L10 10 L12 5.5Z" fill="#2030A0"/><path d="M5 10 L5 13 L7 17 L9 13 L9 10Z" fill="#E8E8F0" stroke="#505050" stroke-width=".7"/><rect x="13" y="1" width="3" height="12" fill="#2838B0" stroke="#101860" stroke-width=".6"/><circle cx="14" cy="15" r="2.2" fill="#F0E040" stroke="#807000" stroke-width=".6"/></svg></div>
<div class="a" style="left:673px;top:61px;line-height:0"><svg width="18" height="18" viewBox="0 0 18 18"><path d="M6 2 L12 2 L16 6 L16 16 L6 16 L6 12 M6 6 L6 2" fill="#fff" stroke="#000" stroke-width="1.3"/><path d="M1 9 L10 9 M7 5.5 L10.5 9 L7 12.5" stroke="#000" stroke-width="2" fill="none"/></svg></div>
<div class="a" style="left:700px;top:61px;line-height:0"><svg width="18" height="18" viewBox="0 0 18 18"><path d="M5 6 L13 6 L13 12 L16 12 L16 16 L2 16 L2 12 L5 12Z" fill="#F4F0D0" stroke="#000" stroke-width="1.2"/><rect x="7" y="8" width="4" height="4" fill="#E8D860" stroke="#000" stroke-width=".7"/><path d="M5 3 L13 3 M7 1 L8 3 M11 1 L10 3" stroke="#404040" stroke-width=".8"/></svg></div>
<div class="a" style="left:727px;top:61px;line-height:0"><svg width="18" height="18" viewBox="0 0 18 18"><path d="M3 5 L3 16 M3 5 L7 5 L7 10 L3 10 M10 3 L10 16 M10 6 L15 6 M10 10 L15 10 M10 14 L15 14" stroke="#000" stroke-width="1.5" fill="none"/><circle cx="10" cy="2.5" r="1.5" fill="#30A030"/><circle cx="15.5" cy="6" r="1.3" fill="#3050C0"/><circle cx="15.5" cy="10" r="1.3" fill="#30A030"/></svg></div>
<div class="a" style="left:754px;top:61px;line-height:0"><svg width="18" height="18" viewBox="0 0 18 18"><path d="M3 1 L8 6 M8 2 L8 6 L4 6" stroke="#000" stroke-width="1.6" fill="none"/><text x="2" y="16.5" font-family="Liberation Sans" font-weight="bold" font-size="8" fill="#000" textLength="15">APT</text></svg></div>
<div class="a" style="left:781px;top:61px;line-height:0"><svg width="18" height="18" viewBox="0 0 18 18"><rect x="2" y="2" width="14" height="14" fill="#F8E8E8"/><path d="M2 3 H16 M2 6 H16 M2 9 H16 M2 12 H16 M2 15 H16" stroke="#D02060" stroke-width="1.1"/><rect x="6" y="4" width="6" height="10" fill="#30A030" stroke="#104010" stroke-width=".6"/><rect x="7" y="6" width="4" height="3" fill="#E8C040"/><path d="M2 16 L8 10" stroke="#E02020" stroke-width="1.5"/></svg></div>
<div class="a" style="left:808px;top:61px;line-height:0"><svg width="18" height="18" viewBox="0 0 18 18"><circle cx="9" cy="9.5" r="7" fill="none" stroke="#D81818" stroke-width="2.4"/><path d="M4 14 L14 5" stroke="#D81818" stroke-width="2.2"/><rect x="5" y="8" width="8" height="3" fill="#30A030"/><path d="M6 2 L12 2 L11 6 L7 6Z" fill="#C02020" stroke="#600000" stroke-width=".6"/></svg></div>
<div class="a" style="left:835px;top:61px;line-height:0"><svg width="18" height="18" viewBox="0 0 18 18"><path d="M1.5 2 L16.5 2 L16.5 16.5 L3 16.5 L1.5 15Z" fill="#8880C8" stroke="#5048A0" stroke-width=".8"/><rect x="4.5" y="3" width="9" height="7.5" fill="#F4F6FA"/><rect x="5" y="12" width="8" height="4.5" fill="#5A52B0"/><rect x="10" y="13" width="2" height="3" fill="#D8D8F0"/></svg></div>
<div class="a" style="left:862px;top:61px;line-height:0"><svg width="18" height="18" viewBox="0 0 18 18"><ellipse cx="5.5" cy="9" rx="3" ry="6" fill="#2848B0" stroke="#102060" transform="rotate(15 5.5 9)"/><ellipse cx="12.5" cy="10" rx="2.6" ry="5.5" fill="#E8C030" stroke="#806000" transform="rotate(15 12.5 10)"/><path d="M8 3 C11 1 14 2 15 4 M9 16 C6 18 3 17 2 15" stroke="#2040C0" stroke-width="1.3" fill="none"/><path d="M15 1 L16 5 L12 4Z M2 18 L1 14 L5 15Z" fill="#2040C0"/></svg></div>
<div class="a" style="left:889px;top:61px;line-height:0"><svg width="18" height="18" viewBox="0 0 18 18"><path d="M1 5 L5 2 L9 10 L15 2 L17 5 L9 17Z" fill="#1858B8" stroke="#0A2860" stroke-width=".8"/><path d="M5 5 L9 12 L13 5 L9 8Z" fill="#D8ECFC"/><path d="M1 5 L5 2 L6 4Z" fill="#30B040"/></svg></div>
<div class="a" style="left:916px;top:61px;line-height:0"><svg width="18" height="18" viewBox="0 0 18 18"><path d="M2 1.5 L12 1.5 L16 5.5 L16 16.5 L2 16.5Z" fill="#F8F8F0" stroke="#000" stroke-width="1.3"/><rect x="6" y="4" width="5" height="9" fill="#30A030" stroke="#104010" stroke-width=".6"/><rect x="6.5" y="6" width="4" height="3" fill="#E8D040"/><path d="M3 5 H5 M3 8 H5 M3 11 H5 M12 8 H15 M12 11 H15 M3 14 H15" stroke="#000" stroke-width="1.2"/></svg></div>
<div class="a" style="left:943px;top:61px;line-height:0"><svg width="18" height="18" viewBox="0 0 18 18"><path d="M1 13 H17" stroke="#000" stroke-width="2"/><path d="M2 15 l1 1 M5 15 l1 1 M8 15 l1 1 M11 15 l1 1 M14 15 l1 1" stroke="#000" stroke-width="1"/><path d="M4 8 L9 8 M13 8 L17 8 M10 3 L10 12" stroke="#000" stroke-width="1.8"/><path d="M6 5.5 L9 8 L6 10.5Z M15 5.5 L12 8 L15 10.5Z" fill="#000"/></svg></div>
<div class="a" style="left:970px;top:61px;line-height:0"><svg width="18" height="18" viewBox="0 0 18 18"><path d="M9 1 L17 9 L9 17 L1 9Z" fill="none" stroke="#303030" stroke-width="1.1"/><circle cx="9" cy="9" r="4.5" fill="none" stroke="#303030" stroke-width="1.1"/><path d="M9 1 V17 M1 9 H17" stroke="#303030" stroke-width="1"/></svg></div>
<div class="a" style="left:997px;top:61px;line-height:0"><svg width="18" height="18" viewBox="0 0 18 18"><path d="M1.5 2 L16.5 2 L16.5 16.5 L3 16.5 L1.5 15Z" fill="#6A62C8" stroke="#3A3490" stroke-width=".8"/><rect x="3.5" y="3" width="11" height="7.5" fill="#E4ECFA"/><rect x="5" y="12" width="8" height="4.5" fill="#B8B4E8"/><rect x="10" y="13" width="2" height="3" fill="#3A3490"/><text x="6.5" y="9.5" font-family="Liberation Sans" font-weight="bold" font-size="7.5" fill="#2A6AC0" >M</text></svg></div>
<div class="a" style="left:1024px;top:61px;line-height:0"><svg width="18" height="18" viewBox="0 0 18 18"><path d="M1.5 2 L16.5 2 L16.5 16.5 L3 16.5 L1.5 15Z" fill="#6A62C8" stroke="#3A3490" stroke-width=".8"/><rect x="3.5" y="3" width="11" height="7.5" fill="#E4ECFA"/><rect x="5" y="12" width="8" height="4.5" fill="#B8B4E8"/><rect x="10" y="13" width="2" height="3" fill="#3A3490"/><text x="6.5" y="9.5" font-family="Liberation Sans" font-weight="bold" font-size="7.5" fill="#2A6AC0" >C</text></svg></div>
<div class="a" style="left:1051px;top:61px;line-height:0"><svg width="18" height="18" viewBox="0 0 18 18"><path d="M1 1 L6 6 M6 2 L6 6 L2 6" stroke="#000" stroke-width="1.8" fill="none"/><g transform="translate(2,1) scale(.88)"><rect x="8" y="1" width="6" height="6" fill="#2E7D32" stroke="#0B3D0E" stroke-width=".8"/><rect x="10" y="2.5" width="2" height="2" fill="#0B3D0E"/><path d="M1 9 L4 7 L17 7 L17 10 L14 11 L3 11Z" fill="#2E8B32" stroke="#0B3D0E" stroke-width=".6"/><rect x="9" y="8" width="1.5" height="1.5" fill="#D8F060"/><path d="M6 11 L14 11 L14 15 L12 17 L6 17Z" fill="#1A1A9A" stroke="#000060" stroke-width=".6"/></g></svg></div>
<div class="a" style="left:1078px;top:61px;line-height:0"><svg width="18" height="18" viewBox="0 0 18 18"><text x="2" y="8" font-family="Liberation Sans" font-weight="bold" font-size="7.5" fill="#2828B8" textLength="13">GM</text><text x="2" y="16" font-family="Liberation Sans" font-weight="bold" font-size="7.5" fill="#2828B8" textLength="13">XY</text></svg></div>
<div class="a" style="left:1105px;top:61px;line-height:0"><svg width="18" height="18" viewBox="0 0 18 18"><text x="0" y="15.5" font-family="Liberation Sans" font-weight="bold" font-size="15" fill="#1818A8" textLength="17" lengthAdjust="spacingAndGlyphs">G1</text></svg></div>
<div class="a" style="left:1132px;top:61px;line-height:0"><svg width="18" height="18" viewBox="0 0 18 18"><path d="M1 2 L6 7 M6 3 L6 7 L2 7" stroke="#000" stroke-width="1.8" fill="none"/><rect x="8.5" y="2.5" width="8" height="14" fill="#E8E8E8" stroke="#202020" stroke-width="1.2"/><rect x="10.5" y="4.5" width="4" height="4" fill="#fff" stroke="#202020"/><rect x="9.5" y="11" width="6" height="5" fill="#A8A8A8"/></svg></div>
<div class="a" style="left:1159px;top:61px;line-height:0"><svg width="18" height="18" viewBox="0 0 18 18"><path d="M1 2 L5 6 M5 3 L5 6 L2 6 M1 16 L5 12 M5 15 L5 12 L2 12" stroke="#000" stroke-width="1.8" fill="none"/><rect x="8.5" y="2.5" width="8" height="14" fill="#E8E8E8" stroke="#202020" stroke-width="1.2"/><rect x="10.5" y="4.5" width="4" height="4" fill="#fff" stroke="#202020"/><rect x="9.5" y="11" width="6" height="5" fill="#A8A8A8"/></svg></div>
<div class="a" style="left:1186px;top:61px;line-height:0"><svg width="18" height="18" viewBox="0 0 18 18"><rect x="1" y="1" width="16" height="16" rx="3" fill="#58B0F0" stroke="#B8E0FC" stroke-width="1.5"/><path d="M3 4 H9 V6.200 H6.600 L9 12 L12.300 4 H15 L10 15 H8Z" fill="#fff"/></svg></div>
<div class="a" style="left:1213px;top:61px;line-height:0"><svg width="18" height="18" viewBox="0 0 18 18"><rect x="8" y="1" width="6" height="6" fill="#2E7D32" stroke="#0B3D0E" stroke-width=".8"/><rect x="10" y="2.5" width="2" height="2" fill="#0B3D0E"/><path d="M1 9 L4 7 L17 7 L17 10 L14 11 L3 11Z" fill="#2E8B32" stroke="#0B3D0E" stroke-width=".6"/><rect x="9" y="8" width="1.5" height="1.5" fill="#D8F060"/><path d="M6 11 L14 11 L14 15 L12 17 L6 17Z" fill="#1A1A9A" stroke="#000060" stroke-width=".6"/></svg></div>
<div class="a" style="left:1240px;top:61px;line-height:0"><svg width="18" height="18" viewBox="0 0 18 18"><path d="M2 9 L10 2 L16 6 L16 11 L8 17 L2 14Z" fill="#E8C830" stroke="#806800" stroke-width=".9"/><path d="M2 9 L8 12 L16 6 M8 12 L8 17" fill="none" stroke="#806800" stroke-width=".9"/><path d="M2 9 L10 2 L16 6 L8 12Z" fill="#F8E060"/></svg></div>
<div class="a" style="left:1267px;top:61px;line-height:0"><svg width="18" height="18" viewBox="0 0 18 18"><path d="M2 9 L10 2 L16 6 L16 11 L8 17 L2 14Z M2 9 L8 12 L16 6 M8 12 L8 17 M10 2 L10 7 L2 14 M10 7 L16 11" fill="none" stroke="#202020" stroke-width="1"/></svg></div>
<div class="a" style="left:1294px;top:61px;line-height:0"><svg width="18" height="18" viewBox="0 0 18 18"><path d="M5 9 L11 4 L14 6 L8 11Z" fill="#F0D040" stroke="#806800" stroke-width=".6"/><path d="M2 9 L10 2 L16 6 L16 11 L8 17 L2 14Z M2 9 L8 12 L16 6 M8 12 L8 17 M10 2 L10 7 L2 14 M10 7 L16 11" fill="none" stroke="#202020" stroke-width="1"/></svg></div>
<div class="a" style="left:1321px;top:61px;line-height:0"><svg width="18" height="18" viewBox="0 0 18 18"><path d="M1 5 L5 2 L9 4 L13 2 L17 4 L17 14 L13 17 L1 17Z" fill="#101010"/><rect x="2" y="6" width="4" height="10" fill="#1838B0"/><rect x="6.5" y="4" width="4" height="12" fill="#30A030"/><path d="M11 6 L16 4.5 L16 13.5 L11 16Z" fill="#E8C030"/><path d="M2 6 L5 3 L9 5 L6 6Z" fill="#4868E0"/></svg></div>
<div class="a" style="left:1348px;top:61px;line-height:0"><svg width="18" height="18" viewBox="0 0 18 18"><path d="M1 6 L5 2 L17 2 L17 13 L13 17 L1 17Z" fill="#E8C830" stroke="#000" stroke-width="1.2"/><path d="M1 6 L13 6 L17 2 M13 6 L13 17" fill="none" stroke="#000" stroke-width="1.1"/><circle cx="7" cy="11.5" r="3.5" fill="#30A030" stroke="#104010" stroke-width=".8"/><path d="M5 3 L9 6 L7 1Z" fill="#30A030"/><circle cx="7" cy="12" r="1.3" fill="#E8F0A0"/></svg></div>
<div class="a" style="left:1375px;top:61px;line-height:0"><svg width="18" height="18" viewBox="0 0 18 18"><path d="M9 2 C3 2 1 6 1 10 C1 14 5 17 9 16 C11 15.5 9 13 11 12 C14 11 17 11 17 8 C17 4 13 2 9 2Z" fill="#F0C048" stroke="#705010" stroke-width="1"/><circle cx="5" cy="7" r="1.6" fill="#D02020"/><circle cx="9" cy="5" r="1.6" fill="#2040C0"/><circle cx="5" cy="12" r="1.6" fill="#30A030"/><path d="M8 14 L16 3" stroke="#202060" stroke-width="1.8"/></svg></div>
<div class="a" style="left:1402px;top:61px;line-height:0"><svg width="18" height="18" viewBox="0 0 18 18"><g transform="translate(1.500,1.500) scale(.86)"><path d="M11 11 L16 16" stroke="#C8A860" stroke-width="3" stroke-linecap="round"/><circle cx="7.5" cy="7.5" r="5.5" fill="#EEF2FA" stroke="#A8B4C8" stroke-width="1.8"/><rect x="5" y="5.5" width="5" height="4" fill="none" stroke="#7080A8" stroke-width="1.2"/></g></svg></div>
<div class="a" style="left:1429px;top:61px;line-height:0"><svg width="18" height="18" viewBox="0 0 18 18"><g transform="translate(1.500,1.500) scale(.86)"><path d="M11 11 L16 16" stroke="#C8A860" stroke-width="3" stroke-linecap="round"/><circle cx="7.5" cy="7.5" r="5.5" fill="#EEF2FA" stroke="#A8B4C8" stroke-width="1.8"/><path d="M4.5 7.5 H10.5 M7.5 4.5 V10.5" stroke="#3858B0" stroke-width="1.8"/></g></svg></div>
<div class="a" style="left:1456px;top:61px;line-height:0"><svg width="18" height="18" viewBox="0 0 18 18"><g transform="translate(1.500,1.500) scale(.86)"><path d="M11 11 L16 16" stroke="#C8A860" stroke-width="3" stroke-linecap="round"/><circle cx="7.5" cy="7.5" r="5.5" fill="#EEF2FA" stroke="#A8B4C8" stroke-width="1.8"/><path d="M4.5 7.5 H10.5" stroke="#7080A8" stroke-width="1.8"/></g></svg></div>
<div class="a" style="left:1483px;top:61px;line-height:0"><svg width="18" height="18" viewBox="0 0 18 18"><path d="M1 1 L17 17 M17 1 L1 17" stroke="#1818C8" stroke-width="1.8"/><path d="M1 5 L1 1 L5 1 M13 1 L17 1 L17 5 M17 13 L17 17 L13 17 M5 17 L1 17 L1 13" stroke="#1818C8" stroke-width="2" fill="none"/><rect x="5.5" y="6" width="7" height="7" fill="#E8C030" stroke="#604800" stroke-width=".9"/><path d="M5.5 6 L8 4 L14 4 L12.5 6 M14 4 L14 11 L12.5 13" fill="#F8E070" stroke="#604800" stroke-width=".8"/></svg></div>
<div class="a" style="left:1510px;top:61px;line-height:0"><svg width="18" height="18" viewBox="0 0 18 18"><path d="M1 9 C5 4 13 4 17 9 C13 13 5 13 1 9Z" fill="#9A9A98"/><ellipse cx="9" cy="9" rx="3.5" ry="3" fill="#202020"/><path d="M1 8 C5 2.5 13 2.5 17 7.5" stroke="#404040" stroke-width="1.6" fill="none"/></svg></div>
<div class="a" style="left:1537px;top:61px;line-height:0"><svg width="18" height="18" viewBox="0 0 18 18"><path d="M1 10 C4 6 9 6 12 10 C9 13 4 13 1 10Z" fill="#9A9A98"/><ellipse cx="7" cy="10" rx="3" ry="2.5" fill="#202020"/><path d="M1 9 C4 4 9 4 12 8" stroke="#404040" stroke-width="1.5" fill="none"/><path d="M13 17 L13 7 L10.5 7 L14 1 L17.5 7 L15 7 L15 17Z" fill="#30D040" stroke="#108020" stroke-width=".6"/></svg></div>
<div class="a" style="left:1564px;top:61px;line-height:0"><svg width="18" height="18" viewBox="0 0 18 18"><text x="0" y="15.5" font-family="Liberation Sans" font-weight="bold" font-size="16" fill="#1818A0" transform="translate(9.5,0) scale(-1,1)">R</text><text x="8" y="15.5" font-family="Liberation Sans" font-weight="bold" font-size="16" fill="#101030" >R</text></svg></div>
<div class="a" style="left:1591px;top:61px;line-height:0"><svg width="18" height="18" viewBox="0 0 18 18"><path d="M5 4 L12 4 L16 8 L16 17 L5 17Z" fill="#C8E0F8" stroke="#7AA0D0"/><text x="7" y="15" font-family="Liberation Sans" font-weight="bold" font-size="8" fill="#2A8AD8" >IP</text><circle cx="5" cy="4" r="3" fill="#fff" stroke="#000" stroke-width="1.3"/><path d="M3 6 L1 9" stroke="#808080" stroke-width="1.6"/></svg></div>
<div class="a" style="left:1618px;top:61px;line-height:0"><svg width="18" height="18" viewBox="0 0 18 18"><circle cx="9" cy="9" r="8" fill="#2878E0" stroke="#A8C8F8" stroke-width="1"/><circle cx="9" cy="5" r="1.5" fill="#fff"/><path d="M7 8 H10 V13 H11.5 V14 H6.5 V13 H8 V9 H7Z" fill="#fff"/></svg></div>
<div class="a" style="left:1645px;top:61px;line-height:0"><svg width="18" height="18" viewBox="0 0 18 18"><path d="M2 1 V16 H17" stroke="#7080C0" stroke-width="1.2" fill="none"/><path d="M3 13 L8 6 L11 10 L16 3" stroke="#E03060" stroke-width="1.3" fill="none"/><path d="M3 14 H16 M3 11 L16 11" stroke="#90A8E0" stroke-width=".6" stroke-dasharray="1 1"/></svg></div>
<div class="a" style="left:376px;top:88px;line-height:0"><svg width="18" height="18" viewBox="0 0 18 18"><path d="M4 4 L12 4 L16 8 L16 17 L4 17Z" fill="#DCEBFA" stroke="#7AA0D0"/><text x="5" y="14" font-family="Liberation Sans" font-weight="bold" font-size="6" fill="#2A7AD0" textLength="10">LOG</text><circle cx="6" cy="4.5" r="3.2" fill="#fff" stroke="#000" stroke-width="1.3"/><path d="M4 7 L1 10" stroke="#808080" stroke-width="1.6"/></svg></div>
<div class="a" style="left:403px;top:88px;line-height:0"><svg width="18" height="18" viewBox="0 0 18 18"><path d="M3 3 L11 3 L15 7 L15 16 L3 16Z" fill="#F0F0F0" stroke="#606060"/><text x="4" y="14" font-family="Liberation Sans" font-weight="bold" font-size="6" fill="#000" textLength="10">LOG</text><path d="M1 1 L17 17 M17 1 L1 17" stroke="#E01818" stroke-width="1.5"/></svg></div>
<div class="a" style="left:430px;top:88px;line-height:0"><svg width="18" height="18" viewBox="0 0 18 18"><rect x="1" y="1" width="16" height="16" fill="#E8C828"/><path d="M1 5 L9 14 L17 5 L17 17 L1 17Z" fill="#1818A0"/><rect x="6" y="3" width="6" height="10" rx="2" fill="#30A030" stroke="#003000" stroke-width=".8"/><ellipse cx="9" cy="4" rx="3" ry="1.5" fill="#B0E0B0"/><path d="M2 8 L16 16" stroke="#E02020" stroke-width="1.3"/></svg></div>
<div class="a" style="left:457px;top:88px;line-height:0"><svg width="18" height="18" viewBox="0 0 18 18"><path d="M9 1 L15 1 L11 7 L15 7 L4 17 L7 10 L3 10Z" fill="#F0C020" stroke="#806000" stroke-width=".9"/></svg></div>
<div class="a" style="left:484px;top:88px;line-height:0"><svg width="18" height="18" viewBox="0 0 18 18"><ellipse cx="5" cy="9" rx="3.5" ry="6" fill="#2848B0" stroke="#102060" transform="rotate(15 5 9)"/><path d="M8 5 L12 3 L12 16 L8 16Z" fill="#30A030"/><path d="M11 8 L14 4 L17 9 L16 17 L10 17Z" fill="#D02020"/><path d="M12 12 L17 6" stroke="#2020C0" stroke-width="1.5"/><path d="M7 1 L9 4" stroke="#000" stroke-width="1.2"/></svg></div>
<div class="a" style="left:511px;top:88px;line-height:0"><svg width="18" height="18" viewBox="0 0 18 18"><path d="M2 1 H16 M2 3 H16 M2 5 H16 M2 7 H16" stroke="#2828B0" stroke-width="1.3" stroke-dasharray="2 1"/><path d="M2 1 V10" stroke="#2828B0" stroke-width="1.5"/><path d="M3 17 L3 13 L6 9 L8 10 L12 5 L14 6 L11 11 L15 9 L16 11 L10 17Z" fill="#fff" stroke="#000" stroke-width="1.1"/><path d="M11 6 L15 10 M9 8 L13 12" stroke="#000" stroke-width="1"/></svg></div>
<div class="a" style="left:538px;top:88px;line-height:0"><svg width="18" height="18" viewBox="0 0 18 18"><rect x="3" y="5" width="10" height="9" fill="#B8B8B8" stroke="#000" stroke-width="1.4"/><path d="M13 8 L17 5.5 L17 13.5 L13 11Z" fill="#000"/><path d="M1 4 H7 M2 4 V8" stroke="#000" stroke-width="1.3"/><circle cx="6" cy="10" r="1" fill="#000"/></svg></div>
<div class="a" style="left:565px;top:88px;line-height:0"><svg width="18" height="18" viewBox="0 0 18 18"><circle cx="4.5" cy="4.5" r="3" fill="#1838A0" stroke="#081040"/><circle cx="11.5" cy="3.5" r="3" fill="#1838A0" stroke="#081040"/><circle cx="4.5" cy="4.5" r="1" fill="#C8D0F0"/><circle cx="11.5" cy="3.5" r="1" fill="#C8D0F0"/><rect x="3" y="8" width="10" height="7" fill="#A8B0D8" stroke="#101840" stroke-width="1.2"/><path d="M13 10 L17 8 L17 15 L13 13Z" fill="#101010"/><path d="M5 15 L3 17 M11 15 L13 17" stroke="#101840" stroke-width="1.2"/></svg></div>
<div class="a" style="left:592px;top:88px;line-height:0"><svg width="18" height="18" viewBox="0 0 18 18"><rect x="1.5" y="3" width="15" height="12" fill="#88D0F8" stroke="#E8D860" stroke-width="1.2"/><path d="M2 10 L6 7 L10 11 L13 8 L16 10 L16 14.5 L2 14.5Z" fill="#28A038"/><rect x="2" y="12.5" width="14" height="2" fill="#E8D860"/></svg></div>
<div class="a" style="left:619px;top:88px;line-height:0"><svg width="18" height="18" viewBox="0 0 18 18"><path d="M4 6 L7 2 L15 2 L14 6Z" fill="#fff" stroke="#909090" stroke-width=".8"/><path d="M1 8 L4 6 L17 6 L17 13 L14 16 L1 16Z" fill="#D8DCE4" stroke="#808890" stroke-width=".9"/><path d="M1 8 L14 8 L17 6 M14 8 L14 16" fill="none" stroke="#808890" stroke-width=".8"/><rect x="3" y="11" width="9" height="3" fill="#404850"/><rect x="11" y="9" width="2" height="1.2" fill="#30C040"/></svg></div>
<div class="a" style="left:646px;top:88px;line-height:0"><svg width="18" height="18" viewBox="0 0 18 18"><path d="M4 14 C1 11 2 5 7 4 M5 15 L9 16" stroke="#000" stroke-width="2" fill="none"/><path d="M4 4 L8 3 L7 7Z" fill="#000"/><path d="M2 15 L8 13 L9 17Z" fill="#F0E850"/><text x="10" y="8" font-family="Liberation Sans" font-weight="bold" font-size="8" fill="#1A1AC8" >X</text></svg></div>
<div class="a" style="left:673px;top:88px;line-height:0"><svg width="18" height="18" viewBox="0 0 18 18"><path d="M4 14 C1 11 2 5 7 4 M5 15 L9 16" stroke="#000" stroke-width="2" fill="none"/><path d="M4 4 L8 3 L7 7Z" fill="#000"/><path d="M2 15 L8 13 L9 17Z" fill="#F0E850"/><text x="10" y="8" font-family="Liberation Sans" font-weight="bold" font-size="8" fill="#1A1AC8" >Y</text></svg></div>
<div class="a" style="left:700px;top:88px;line-height:0"><svg width="18" height="18" viewBox="0 0 18 18"><path d="M4 6 C2 9 3 14 8 15 C12 15.5 14 12 13 9" stroke="#000" stroke-width="2" fill="none"/><path d="M2 6 L7 4 L6 9Z M15 9 L10 9 L13 5Z" fill="#000"/><path d="M1 14 L6 12 L7 17Z" fill="#F0E850"/><text x="11" y="7" font-family="Liberation Sans" font-weight="bold" font-size="8" fill="#1A1AC8" >Z</text></svg></div>
<div class="a" style="left:727px;top:88px;line-height:0"><svg width="18" height="18" viewBox="0 0 18 18"><path d="M4 6 C2 9 3 13 7 14 M9 8 L13 12 M9 12 L13 16" stroke="#000" stroke-width="1.8" fill="none"/><path d="M2 6 L7 4 L6 9Z M12 14 L15 16 L11 17Z" fill="#000"/><path d="M1 13 L6 11 L7 16Z" fill="#F0E850"/><text x="3" y="7" font-family="Liberation Sans" font-weight="bold" font-size="7" fill="#1A1AC8" >X</text><text x="10" y="7" font-family="Liberation Sans" font-weight="bold" font-size="7" fill="#1A1AC8" >Y</text><text x="6" y="12" font-family="Liberation Sans" font-weight="bold" font-size="6" fill="#1A1AC8" >Z</text></svg></div>
<div class="a" style="left:754px;top:88px;line-height:0"><svg width="18" height="18" viewBox="0 0 18 18"><path d="M9 2 V16 M2 9 H16" stroke="#000" stroke-width="1.6"/><path d="M6.5 4.5 L9 1 L11.5 4.5Z M6.5 13.5 L9 17 L11.5 13.5Z M4.5 6.5 L1 9 L4.5 11.5Z M13.5 6.5 L17 9 L13.5 11.5Z" fill="#000"/></svg></div>
<div class="a" style="left:781px;top:88px;line-height:0"><svg width="18" height="18" viewBox="0 0 18 18"><path d="M9 11 L12 15" stroke="#C8B888" stroke-width="2.5" stroke-linecap="round"/><circle cx="6" cy="8" r="4.5" fill="#F4F4F4" stroke="#A8A8A8" stroke-width="1.4"/><circle cx="12.5" cy="5" r="3.2" fill="#F4F4F4" stroke="#B0B0B0" stroke-width="1.2"/><path d="M14 8 L16 11" stroke="#D8C8A0" stroke-width="2"/></svg></div>
<div class="a" style="left:808px;top:88px;line-height:0"><svg width="18" height="18" viewBox="0 0 18 18"><defs><linearGradient id="lg" x1="0" y1="0" x2="1" y2="1"><stop offset="0" stop-color="#fff"/><stop offset="1" stop-color="#8080D8"/></linearGradient></defs><rect x="2" y="2" width="14" height="14" fill="url(#lg)" stroke="#000" stroke-width="1.2"/></svg></div>
<div class="a" style="left:835px;top:88px;line-height:0"><svg width="18" height="18" viewBox="0 0 18 18"><defs><linearGradient id="lg" x1="0" y1="0" x2="1" y2="1"><stop offset="0" stop-color="#fff"/><stop offset="1" stop-color="#8080D8"/></linearGradient></defs><rect x="2" y="2" width="6" height="14" fill="url(#lg)" stroke="#000" stroke-width="1.2"/><rect x="10" y="2" width="6" height="14" fill="url(#lg)" stroke="#000" stroke-width="1.2"/></svg></div>
<div class="a" style="left:862px;top:88px;line-height:0"><svg width="18" height="18" viewBox="0 0 18 18"><defs><linearGradient id="lg" x1="0" y1="0" x2="1" y2="1"><stop offset="0" stop-color="#fff"/><stop offset="1" stop-color="#8080D8"/></linearGradient></defs><rect x="2" y="2" width="14" height="6" fill="url(#lg)" stroke="#000" stroke-width="1.2"/><rect x="2" y="10" width="14" height="6" fill="url(#lg)" stroke="#000" stroke-width="1.2"/></svg></div>
<div class="a" style="left:889px;top:88px;line-height:0"><svg width="18" height="18" viewBox="0 0 18 18"><defs><linearGradient id="lg" x1="0" y1="0" x2="1" y2="1"><stop offset="0" stop-color="#fff"/><stop offset="1" stop-color="#8080D8"/></linearGradient></defs><rect x="2" y="2" width="6" height="14" fill="url(#lg)" stroke="#000" stroke-width="1.2"/><rect x="10" y="2" width="6" height="6" fill="url(#lg)" stroke="#000" stroke-width="1.2"/><rect x="10" y="10" width="6" height="6" fill="url(#lg)" stroke="#000" stroke-width="1.2"/></svg></div>
<div class="a" style="left:916px;top:88px;line-height:0"><svg width="18" height="18" viewBox="0 0 18 18"><defs><linearGradient id="lg" x1="0" y1="0" x2="1" y2="1"><stop offset="0" stop-color="#fff"/><stop offset="1" stop-color="#8080D8"/></linearGradient></defs><rect x="2" y="2" width="14" height="6" fill="url(#lg)" stroke="#000" stroke-width="1.2"/><rect x="2" y="10" width="6" height="6" fill="url(#lg)" stroke="#000" stroke-width="1.2"/><rect x="10" y="10" width="6" height="6" fill="url(#lg)" stroke="#000" stroke-width="1.2"/></svg></div>
<div class="a" style="left:943px;top:88px;line-height:0"><svg width="18" height="18" viewBox="0 0 18 18"><defs><linearGradient id="lg" x1="0" y1="0" x2="1" y2="1"><stop offset="0" stop-color="#fff"/><stop offset="1" stop-color="#8080D8"/></linearGradient></defs><rect x="2" y="2" width="6" height="6" fill="url(#lg)" stroke="#000" stroke-width="1.2"/><rect x="10" y="2" width="6" height="6" fill="url(#lg)" stroke="#000" stroke-width="1.2"/><rect x="2" y="10" width="6" height="6" fill="url(#lg)" stroke="#000" stroke-width="1.2"/><rect x="10" y="10" width="6" height="6" fill="url(#lg)" stroke="#000" stroke-width="1.2"/></svg></div>
<div class="a" style="left:970px;top:88px;line-height:0"><svg width="18" height="18" viewBox="0 0 18 18"><path d="M2 3 C6 6 11 11 15 16 M15 2 C10 6 6 11 3 16" stroke="#C81818" stroke-width="2.2" fill="none" stroke-linecap="round"/></svg></div>
<div class="a" style="left:359px;top:113px;width:1321px;height:809px;background:linear-gradient(#0B4FD8 0,#0B4FD8 805px,#0838B0 809px)"></div>
<div class="a" style="left:359px;top:113px;width:1321px;height:25px;background:linear-gradient(#0A5FE0 0,#2B7CF2 2px,#0758E8 6px,#0353E0 12px,#0455E3 20px,#0349CC 24px,#0242BB 25px)"></div>
<svg class="a" style="left:365px;top:118px" width="15" height="15" viewBox="0 0 15 15"><rect x=".5" y=".5" width="14" height="14" rx="2.5" fill="#58B0F0" stroke="#B8E0FC"/><path d="M2.500 3.500 H7.500 V5.300 H5.500 L7.500 10 L10.300 3.500 H12.500 L8.300 12.500 H6.600Z" fill="#fff"/></svg>
<div class="t b" style="left:385px;top:118px;color:#fff;font-size:12px;text-shadow:1px 1px 0 #0A2A7A">View 2 - Base (机床/切削模型)</div>
<svg class="a" style="left:364px;top:139px" width="1313" height="778" viewBox="364 139 1313 778" shape-rendering="geometricPrecision"><defs><linearGradient id="bg" x1="0" y1="0" x2="0" y2="1"><stop offset="0" stop-color="#3A3A3A"/><stop offset="1" stop-color="#CACACA"/></linearGradient><linearGradient id="cyl" x1="0" y1="0" x2="1" y2="0"><stop offset="0" stop-color="#B0B0B0"/><stop offset=".45" stop-color="#FAFAFA"/><stop offset=".85" stop-color="#C8C8C8"/><stop offset="1" stop-color="#707070"/></linearGradient><linearGradient id="tube" x1="0" y1="0" x2="1" y2="0"><stop offset="0" stop-color="#C8C8C8"/><stop offset=".5" stop-color="#FFFFFF"/><stop offset="1" stop-color="#A0A0A0"/></linearGradient><radialGradient id="beige" cx=".4" cy=".35" r=".8"><stop offset="0" stop-color="#EAD6B0"/><stop offset="1" stop-color="#B8A070"/></radialGradient></defs><rect x="364" y="139" width="1313" height="778" fill="url(#bg)"/><polygon points="1213.0,184.0 1247.0,188.6 1236.0,640.0 1207.0,720.0" fill="#1C1C1C" /><polygon points="750.6,166.0 817.5,139.0 1214.8,180.7 1059.7,258.0 1020.0,262.0 869.0,232.0" fill="#353535" /><polygon points="665.7,207.5 750.6,166.0 950.0,188.0 869.0,229.5" fill="#1E1E1E" /><polygon points="664.0,208.5 869.0,229.5 873.0,240.0 866.0,641.0 860.0,679.0 872.8,707.0 669.6,687.7 654.0,658.0" fill="#4A4A4A" /><rect x="662.5" y="229" width="1.6" height="7" fill="#E8E8E8"/><rect x="661.6" y="273" width="1.6" height="9" fill="#E8E8E8"/><rect x="660.7" y="318" width="1.6" height="9" fill="#E8E8E8"/><rect x="659.8" y="363" width="1.6" height="9" fill="#E8E8E8"/><polygon points="701.0,211.0 833.0,225.6 830.0,363.0 698.0,348.0" fill="#8A8A8A" /><polygon points="700.0,349.0 818.0,363.0 812.8,616.6 696.6,605.0" fill="#E6E6E6" /><polygon points="692.0,606.7 824.0,621.0 823.0,674.0 690.0,660.7" fill="#8C8C8C" /><path d="M692 606.5 L824 620.8" stroke="#151515" stroke-width="1.5"/><polygon points="669.6,687.7 872.8,707.0 871.5,757.0 668.3,735.3" fill="#8E8E8E" /><polygon points="720.0,741.0 732.0,743.0 732.0,750.0" fill="#E6E6E6" /><polygon points="732.5,742.5 872.5,756.0 875.0,747.5 1050.0,766.0 1050.0,780.0 1055.0,779.0 1047.0,830.0 1025.0,829.0 1013.8,866.0 711.0,832.5 705.0,831.0 710.0,793.8 732.5,783.8" fill="#464646" /><polygon points="705.0,831.0 710.0,793.8 732.5,783.8 732.5,790.0 716.0,798.0 711.0,832.5" fill="#303030" /><polygon points="1025.0,829.0 1047.0,830.0 1049.0,780.0 1056.0,779.0 1054.0,822.0 1118.0,817.0 1017.5,865.8 1013.8,866.0" fill="#262626" /><path d="M843.5 345 C 843 420, 839 500, 835.8 590 L 836.8 651" stroke="#9A9A9A" stroke-width="7" fill="none"/><path d="M843 345 C 842.500 420, 838.500 500, 835.300 590 L 836.300 651" stroke="#F4F4F4" stroke-width="5" fill="none"/><polygon points="868.0,229.0 873.5,237.0 869.0,470.0 864.0,640.0 860.0,679.0 866.0,640.0" fill="#2E2E2E" /><polygon points="945.7,202.9 1095.7,218.6 1048.6,242.9 1060.0,258.0 1055.0,480.0 1051.0,640.0 1050.7,695.5 1016.0,693.0 1019.0,484.0 870.0,468.0 873.5,237.0" fill="#E6E6E6" /><polygon points="980.0,237.1 1048.6,242.9 1038.6,247.1 975.7,240.0" fill="#353535" /><polygon points="975.7,240.0 1038.6,247.1 1025.0,254.3 1023.6,288.6 957.1,282.1 947.9,271.4" fill="#6E6E6E" /><polygon points="947.9,271.4 957.1,282.1 953.0,430.0 944.0,428.0" fill="#6A6A6A" /><polygon points="870.0,467.0 926.0,473.5 1020.0,484.0 1019.0,641.0 1016.8,691.6 1032.0,734.0 1032.0,762.0 876.6,747.0 880.5,713.5 872.8,707.0 860.0,679.0 863.8,641.0" fill="#484848" /><polygon points="880.5,713.5 1024.0,727.0 1032.0,734.0 1032.0,762.0 876.6,747.0" fill="#444444" /><polygon points="872.8,707.0 880.5,713.5 876.6,747.0 871.5,757.0 871.0,750.0" fill="#404040" /><path d="M876.6 747 L1049 767" stroke="#101010" stroke-width="1.4"/><clipPath id="cint0"><polygon points="866,470 1019,484 1016,700 866,700"/></clipPath><g clip-path="url(#cint0)"><ellipse cx="956" cy="582" rx="66" ry="90" fill="#3A3A3A"/></g><polygon points="1016.0,693.0 1050.7,695.5 1067.4,734.0 1032.7,732.7" fill="#8C8C8C" /><polygon points="1032.7,732.7 1067.4,734.0 1066.0,784.0 1049.4,780.0 1049.4,767.5 1032.7,765.0" fill="#E6E6E6" /><polygon points="1059.7,258.0 1214.8,180.7 1209.0,713.5 1067.4,784.0 1067.4,734.0 1050.7,695.5 1051.0,640.0" fill="#5A5A5A" /><polygon points="1067.4,784.0 1209.0,713.5 1209.0,721.0 1134.0,789.0 1093.0,790.0 1066.0,790.0" fill="#2C2C2C" /><polygon points="1079.9,374.3 1117.4,355.0 1112.4,607.7 1062.0,634.0 1064.0,437.0 1079.0,433.0" fill="#4C4C4C" /><polygon points="1117.4,355.0 1122.7,352.0 1117.4,604.7 1112.4,607.7" fill="#EDEDED" /><polygon points="1062.0,602.0 1112.4,607.7 1062.0,634.0" fill="#535353" /><path d="M1062 602.500 L1075 603.500" stroke="#202020" stroke-width="1.200"/><polygon points="1077.0,390.0 1079.5,390.0 1079.5,425.0 1077.0,425.0" fill="#E8E8E8" /><polygon points="1071.0,423.0 1078.4,423.0 1078.4,439.0 1071.0,439.0" fill="#E8E8E8" /><polygon points="1065.0,430.0 1069.5,444.0 1065.0,446.0" fill="#B8B8B8" /><polygon points="1065.0,445.0 1085.8,440.8 1087.0,452.6 1106.5,455.6 1106.5,501.0 1065.0,490.0" fill="#181818" /><polygon points="1066.5,463.0 1103.5,460.0 1102.0,495.5 1065.0,481.0" fill="#3A3A3A" /><polygon points="1065.0,481.0 1102.0,495.5 1106.5,501.0 1065.0,490.0" fill="#1C1C1C" /><text x="0" y="0" font-family="Liberation Sans,sans-serif" font-weight="bold" font-size="16.500" fill="#12125A" stroke="#12125A" stroke-width=".45" textLength="59" lengthAdjust="spacingAndGlyphs" transform="translate(1065.500,370.500) skewY(-24.600)">DECKEL MAHO</text><clipPath id="cint"><polygon points="866,470 1019,484 1016,700 866,700"/></clipPath><defs><linearGradient id="ring" x1="0" y1="0" x2="1" y2="0"><stop offset="0" stop-color="#E8D6AC"/><stop offset=".7" stop-color="#DCC89C"/><stop offset="1" stop-color="#B8A478"/></linearGradient><linearGradient id="rin" x1="0" y1="0" x2="1" y2="0"><stop offset="0" stop-color="#54452C"/><stop offset="1" stop-color="#A08C64"/></linearGradient></defs><g clip-path="url(#cint)"><ellipse cx="957" cy="615" rx="60" ry="63" fill="url(#ring)"/><path d="M878 622 C 900 636, 950 636, 985 618 C 984 640, 975 656, 960 662 C 935 668, 905 662, 893 648 C 885 640, 880 632, 878 622Z" fill="url(#rin)"/><path d="M950 628 L985 618 C 984 640, 975 656, 960 662 L 952 652Z" fill="#BCA87C"/><path d="M968 624 L985 618 C 984 640, 978 652, 970 658Z" fill="#D0BC90"/></g><polygon points="931.0,560.0 990.0,556.0 996.0,590.0 975.0,600.0 931.0,596.0" fill="#DCC8A0" /><polygon points="934.3,518.0 980.0,522.9 977.0,583.0 933.3,579.0" fill="#E4CFA8" /><polygon points="980.0,522.9 989.5,518.0 989.5,556.0 982.0,571.0 977.0,583.0" fill="#BCA67C" /><path d="M868 608 L986 610 L986 613 C 960 629, 905 628, 870 617Z" fill="#858585"/><path d="M870 617 C 905 628, 960 629, 986 613 L986 616 C 960 632, 905 631, 871 620Z" fill="#505050"/><path d="M866 604 L880 599 L990 604 L986 611 L868 609Z" fill="#2E2E2E"/><path d="M866 579 L884 579 M866 590 L883 590 M867 597 L884 597 M966 597 L986 601" stroke="#1C1C1C" stroke-width="1.600"/><path d="M868 608.500 L985 610.500" stroke="#C0C0C0" stroke-width=".8"/><polygon points="882.9,582.9 955.2,590.5 955.2,605.7 882.9,601.0" fill="#E8C400" /><polygon points="882.9,582.9 895.0,577.0 966.7,583.8 955.2,590.5" fill="#4A3C04" /><polygon points="955.2,590.5 966.7,583.8 966.7,600.0 955.2,605.7" fill="#B49400" /><polygon points="931.0,438.6 948.0,429.3 967.7,434.3 972.0,436.0 972.0,452.0 986.0,470.0 992.0,476.5 1020.0,481.0 1020.0,484.5 982.0,480.0 982.0,488.0 933.0,481.0 931.0,478.0" fill="#161616" /><polygon points="963.4,434.0 967.7,434.3 967.7,443.0 963.4,443.0" fill="#3A3A3A" /><polygon points="937.9,452.5 960.3,452.5 960.3,465.7 937.9,465.7" fill="#424242" /><polygon points="1007.5,439.3 1020.7,440.0 1020.7,448.6 1007.5,448.3" fill="#4A4A4A" /><polygon points="972.7,435.5 977.3,436.0 978.9,447.0 974.0,444.0" fill="#B0B0B0" /><path d="M978.9 446 L1019 449 L1016 470 C 1006 473.500, 994 472.500, 987.400 469Z" fill="url(#cyl)"/><polygon points="977.3,436.3 1000.2,437.8 1000.2,447.1 1006.0,447.4 1006.5,449.0 978.9,447.0" fill="#F0F0F0" /><path d="M980 447 L984.500 458 M985 447.500 L988.500 459 M990 448 L992.500 459.500 M994.500 448 L996.500 459" stroke="#2A2A2A" stroke-width="1.400"/><path d="M926.700 444 L926.700 603 L1069 617" stroke="#FFFFFF" stroke-width="1.300" fill="none"/><path d="M926.700 603 L984 570" stroke="#FFFFFF" stroke-width="1.300" stroke-dasharray="7 4" fill="none"/><text x="928.500" y="451" font-family="Liberation Serif,serif" font-style="italic" font-size="12" fill="#fff" textLength="49.500">Z2:3 :Stock</text><text x="1068" y="618" font-family="Liberation Serif,serif" font-style="italic" font-size="12" fill="#fff">X</text><text x="982" y="574" font-family="Liberation Serif,serif" font-style="italic" font-size="12" fill="#fff">Y</text><polygon points="1248.0,714.0 1272.0,716.0 1251.0,818.0 1223.0,798.0" fill="#555555" /><polygon points="1272.0,716.0 1279.0,717.0 1250.0,820.0 1240.0,829.0 1251.0,818.0" fill="#2A2A2A" /><polygon points="1053.0,788.0 1109.0,789.0 1223.0,804.8 1251.0,818.0 1240.0,829.0 1114.0,818.0 1054.0,822.0" fill="#484848" /><polygon points="1093.0,788.0 1134.0,788.0 1223.0,798.5 1223.0,805.5 1109.0,790.0" fill="#2C2C2C" /><rect x="1058" y="793" width="17" height="21" fill="#2A2A2A"/><rect x="1087" y="776" width="13" height="12" rx="2" fill="#6A6A6A"/><ellipse cx="1093.500" cy="777" rx="6.5" ry="2" fill="#808080"/><polygon points="1236.0,515.0 1351.7,527.0 1341.0,625.7 1226.7,613.8" fill="#585858" /><polygon points="1245.7,529.3 1338.6,538.8 1330.2,611.4 1238.6,601.9" fill="#EAEAEA" /><polygon points="1226.7,613.8 1341.0,625.7 1314.8,673.3 1195.7,665.0" fill="#3C3C3C" /><polygon points="1229.0,619.8 1327.9,630.5 1317.0,654.3 1216.0,642.4" fill="#9C9C9C" /><polygon points="1195.7,665.0 1314.8,673.3 1306.4,719.8 1189.8,707.9" fill="#5A5A5A" /><path d="M1233 513 L1227 614 L1194 664 L1188 709" stroke="#1C3E5A" stroke-width="6.5" fill="none" stroke-linejoin="round"/><path d="M1357 527 L1347 624 L1319 674 L1311 722" stroke="#173450" stroke-width="9" fill="none" stroke-linejoin="round"/><path d="M1360 528 L1350 625 L1322 675 L1314 723" stroke="#0E2030" stroke-width="3" fill="none" stroke-linejoin="round"/><circle cx="1217" cy="648.500" r="7" fill="#EE1010"/><polygon points="1225.8,650.7 1237.7,651.7 1234.7,662.6 1222.8,661.6" fill="#1C1C38"/><polygon points="1240.1,657.9 1247.2,658.9 1244.2,666.2 1237.1,665.2" fill="#1C1C38"/><polygon points="1244.8,649.5 1254.4,650.5 1251.4,655.5 1241.8,654.5" fill="#1C1C38"/><polygon points="1253.2,655.5 1273.4,656.5 1270.4,663.8 1250.2,662.8" fill="#1C1C38"/><polygon points="1280.5,653.1 1312.7,654.1 1309.7,661.4 1277.5,660.4" fill="#1C1C38"/><polygon points="1275.8,662.6 1305.5,663.6 1302.5,671.0 1272.8,670.0" fill="#1C1C38"/><circle cx="1211" cy="660" r="3" fill="#1C1C38"/><circle cx="1201.7" cy="686.4" r="3.2" fill="#20203C"/><circle cx="1217.0" cy="687.6" r="6.0" fill="#20203C"/><circle cx="1239.8" cy="689.5" r="6.0" fill="#20203C"/><circle cx="1282.6" cy="694.8" r="3.5" fill="#20203C"/><circle cx="1291.7" cy="696.0" r="3.5" fill="#20203C"/><circle cx="1301.0" cy="696.7" r="3.5" fill="#20203C"/></svg>
<div class="a" style="left:1612px;top:116px;width:19px;height:19px;background:linear-gradient(135deg,#7AA8F8 0,#2A62DC 45%,#2050C8 100%);border:1px solid #fff;border-radius:3px"></div><div class="a" style="left:1617px;top:128px;width:7px;height:3px;background:#fff"></div>
<div class="a" style="left:1635px;top:116px;width:19px;height:19px;background:linear-gradient(135deg,#7AA8F8 0,#2A62DC 45%,#2050C8 100%);border:1px solid #fff;border-radius:3px"></div><div class="a" style="left:1642px;top:120px;width:8px;height:7px;border:1px solid #fff;border-top-width:2px"></div><div class="a" style="left:1639px;top:124px;width:8px;height:7px;border:1px solid #fff;border-top-width:2px;background:#2A62DC"></div>
<div class="a" style="left:1658px;top:116px;width:19px;height:19px;background:linear-gradient(135deg,#E8907A 0,#D8502C 40%,#C03A18 100%);border:1px solid #fff;border-radius:3px"></div><svg class="a" style="left:1658px;top:116px" width="19" height="19" viewBox="0 0 21 21"><path d="M5.500 5.500 L15.500 15.500 M15.500 5.500 L5.500 15.500" stroke="#fff" stroke-width="2.4"/></svg>
<div class="a" style="left:1615px;top:6px;width:21px;height:21px;background:linear-gradient(135deg,#7AA8F8 0,#2A62DC 45%,#2050C8 100%);border:1px solid #fff;border-radius:3px"></div><div class="a" style="left:1620px;top:20px;width:7px;height:3px;background:#fff"></div>
<div class="a" style="left:1638px;top:6px;width:21px;height:21px;background:linear-gradient(135deg,#7AA8F8 0,#2A62DC 45%,#2050C8 100%);border:1px solid #fff;border-radius:3px"></div><div class="a" style="left:1643px;top:11px;width:11px;height:10px;border:1px solid #fff;border-top-width:3px"></div>
<div class="a" style="left:1661px;top:6px;width:21px;height:21px;background:linear-gradient(135deg,#E8907A 0,#D8502C 40%,#C03A18 100%);border:1px solid #fff;border-radius:3px"></div><svg class="a" style="left:1661px;top:6px" width="21" height="21" viewBox="0 0 21 21"><path d="M5.500 5.500 L15.500 15.500 M15.500 5.500 L5.500 15.500" stroke="#fff" stroke-width="2.4"/></svg>
<div class="a" style="left:363px;top:927px;width:3px;height:22px;background:repeating-linear-gradient(#C6C2B0 0 2px,transparent 2px 4px)"></div>
<div class="a" style="left:363px;top:964px;width:3px;height:50px;background:repeating-linear-gradient(#C6C2B0 0 2px,transparent 2px 4px)"></div>
<div class="a" style="left:380px;top:936px;width:404px;height:5px;border:1px solid #B8B5A6;border-bottom-color:#fff;border-right-color:#fff;background:#F0EEE4;border-radius:2px"></div>
<div class="a" style="left:567px;top:928px;width:11px;height:20px;background:linear-gradient(90deg,#fff,#E4E2D8);border:1px solid #9AA89A;border-top:2px solid #48B048;border-bottom:2px solid #48B048;border-radius:2px"></div>
<svg class="a" style="left:790px;top:924px" width="306" height="30" viewBox="0 0 306 30"><defs><radialGradient id="ld" cx=".45" cy=".3" r=".7"><stop offset="0" stop-color="#6AB86A"/><stop offset=".45" stop-color="#187018"/><stop offset="1" stop-color="#043004"/></radialGradient><radialGradient id="lb" cx=".5" cy=".4" r=".7"><stop offset="0" stop-color="#50F050"/><stop offset=".6" stop-color="#18C828"/><stop offset="1" stop-color="#086010"/></radialGradient></defs><path d="M5.0 4 V24" stroke="#CFCBBB" stroke-width="1"/><path d="M6.0 4 V24" stroke="#fff" stroke-width="1"/><ellipse cx="21.5" cy="10.5" rx="9.5" ry="7.2" fill="url(#ld)" stroke="#1A2A1A" stroke-width=".8"/><text x="10.8" y="25.2" font-family="Liberation Sans,sans-serif" font-weight="bold" font-size="9" fill="#000" textLength="21.5" lengthAdjust="spacingAndGlyphs">LIMIT</text><path d="M38.0 4 V24" stroke="#CFCBBB" stroke-width="1"/><path d="M39.0 4 V24" stroke="#fff" stroke-width="1"/><ellipse cx="54.5" cy="10.5" rx="9.5" ry="7.2" fill="url(#ld)" stroke="#1A2A1A" stroke-width=".8"/><text x="45.2" y="25.2" font-family="Liberation Sans,sans-serif" font-weight="bold" font-size="9" fill="#000" textLength="18.5" lengthAdjust="spacingAndGlyphs">COLL</text><path d="M71.0 4 V24" stroke="#CFCBBB" stroke-width="1"/><path d="M72.0 4 V24" stroke="#fff" stroke-width="1"/><ellipse cx="87.5" cy="10.5" rx="9.5" ry="7.2" fill="url(#ld)" stroke="#1A2A1A" stroke-width=".8"/><text x="75.2" y="25.2" font-family="Liberation Sans,sans-serif" font-weight="bold" font-size="9" fill="#000" textLength="24.5" lengthAdjust="spacingAndGlyphs">PROBE</text><path d="M104.0 4 V24" stroke="#CFCBBB" stroke-width="1"/><path d="M105.0 4 V24" stroke="#fff" stroke-width="1"/><ellipse cx="120.5" cy="10.5" rx="9.5" ry="7.2" fill="url(#ld)" stroke="#1A2A1A" stroke-width=".8"/><text x="113.2" y="25.2" font-family="Liberation Sans,sans-serif" font-weight="bold" font-size="9" fill="#000" textLength="14.5" lengthAdjust="spacingAndGlyphs">SUB</text><path d="M137.0 4 V24" stroke="#CFCBBB" stroke-width="1"/><path d="M138.0 4 V24" stroke="#fff" stroke-width="1"/><ellipse cx="153.5" cy="10.5" rx="9.5" ry="7.2" fill="url(#ld)" stroke="#1A2A1A" stroke-width=".8"/><text x="143.0" y="25.2" font-family="Liberation Sans,sans-serif" font-weight="bold" font-size="9" fill="#000" textLength="21.0" lengthAdjust="spacingAndGlyphs">COMP</text><path d="M170.0 4 V24" stroke="#CFCBBB" stroke-width="1"/><path d="M171.0 4 V24" stroke="#fff" stroke-width="1"/><ellipse cx="186.5" cy="10.5" rx="9.5" ry="7.2" fill="url(#ld)" stroke="#1A2A1A" stroke-width=".8"/><text x="175.0" y="25.2" font-family="Liberation Sans,sans-serif" font-weight="bold" font-size="9" fill="#000" textLength="23.0" lengthAdjust="spacingAndGlyphs">CYCLE</text><path d="M203.0 4 V24" stroke="#CFCBBB" stroke-width="1"/><path d="M204.0 4 V24" stroke="#fff" stroke-width="1"/><ellipse cx="219.5" cy="10.5" rx="9.5" ry="7.2" fill="url(#lb)" stroke="#1A2A1A" stroke-width=".8"/><text x="210.8" y="25.2" font-family="Liberation Sans,sans-serif" font-weight="bold" font-size="9" fill="#000" textLength="17.5" lengthAdjust="spacingAndGlyphs">FEED</text><path d="M236.0 4 V24" stroke="#CFCBBB" stroke-width="1"/><path d="M237.0 4 V24" stroke="#fff" stroke-width="1"/><ellipse cx="252.5" cy="10.5" rx="9.5" ry="7.2" fill="url(#ld)" stroke="#1A2A1A" stroke-width=".8"/><text x="243.5" y="25.2" font-family="Liberation Sans,sans-serif" font-weight="bold" font-size="9" fill="#000" textLength="18.0" lengthAdjust="spacingAndGlyphs">OPTI</text><path d="M269.0 4 V24" stroke="#CFCBBB" stroke-width="1"/><path d="M270.0 4 V24" stroke="#fff" stroke-width="1"/><ellipse cx="285.5" cy="10.5" rx="9.5" ry="7.2" fill="url(#lb)" stroke="#1A2A1A" stroke-width=".8"/><text x="273.2" y="25.2" font-family="Liberation Sans,sans-serif" font-weight="bold" font-size="9" fill="#000" textLength="24.5" lengthAdjust="spacingAndGlyphs">READY</text><path d="M302.5 4 V24" stroke="#CFCBBB" stroke-width="1"/></svg>
<div class="a" style="left:1097px;top:928px;width:419px;height:21px;background:#316AC5;border:1px solid #6F6F6F;border-right-color:#fff;border-bottom-color:#fff;box-shadow:inset 1px 1px 0 #2A2A2A"></div>
<svg class="a" style="left:1519px;top:924px" width="27" height="27" viewBox="0 0 27 27"><defs><linearGradient id="pb" x1="0" y1="0" x2="0" y2="1"><stop offset="0" stop-color="#F4F4F4"/><stop offset=".5" stop-color="#A8A8A8"/><stop offset="1" stop-color="#606060"/></linearGradient></defs><circle cx="13.500" cy="13.500" r="12.500" fill="url(#pb)" stroke="#505050" stroke-width="1"/><circle cx="13.500" cy="13.500" r="9.500" fill="#9C9C9C" stroke="#787878" stroke-width=".8"/><path d="M7.500 14 L13.500 7 L19.500 14Z" fill="#1848B8" stroke="#082060" stroke-width=".6"/><rect x="7.500" y="15.500" width="12" height="3" fill="#1848B8"/></svg>
<svg class="a" style="left:1552px;top:924px" width="27" height="27" viewBox="0 0 27 27"><defs><linearGradient id="pb" x1="0" y1="0" x2="0" y2="1"><stop offset="0" stop-color="#F4F4F4"/><stop offset=".5" stop-color="#A8A8A8"/><stop offset="1" stop-color="#606060"/></linearGradient></defs><circle cx="13.500" cy="13.500" r="12.500" fill="url(#pb)" stroke="#505050" stroke-width="1"/><circle cx="13.500" cy="13.500" r="9.500" fill="#9C9C9C" stroke="#787878" stroke-width=".8"/><rect x="6.500" y="7.500" width="3" height="12" fill="#1848B8"/><path d="M15 7.500 L9.500 13.500 L15 19.500Z M21 7.500 L15.500 13.500 L21 19.500Z" fill="#1848B8"/></svg>
<svg class="a" style="left:1585px;top:924px" width="27" height="27" viewBox="0 0 27 27"><defs><linearGradient id="pb" x1="0" y1="0" x2="0" y2="1"><stop offset="0" stop-color="#F4F4F4"/><stop offset=".5" stop-color="#A8A8A8"/><stop offset="1" stop-color="#606060"/></linearGradient></defs><circle cx="13.500" cy="13.500" r="12.500" fill="url(#pb)" stroke="#505050" stroke-width="1"/><circle cx="13.500" cy="13.500" r="9.500" fill="#9C9C9C" stroke="#787878" stroke-width=".8"/><rect x="8" y="7" width="4.500" height="13" rx="1" fill="#C81010"/><rect x="14.500" y="7" width="4.500" height="13" rx="1" fill="#C81010"/></svg>
<svg class="a" style="left:1618px;top:924px" width="27" height="27" viewBox="0 0 27 27"><defs><linearGradient id="pb" x1="0" y1="0" x2="0" y2="1"><stop offset="0" stop-color="#F4F4F4"/><stop offset=".5" stop-color="#A8A8A8"/><stop offset="1" stop-color="#606060"/></linearGradient></defs><circle cx="13.500" cy="13.500" r="12.500" fill="url(#pb)" stroke="#505050" stroke-width="1"/><circle cx="13.500" cy="13.500" r="9.500" fill="#9C9C9C" stroke="#787878" stroke-width=".8"/><path d="M10 6 L18 13.500 L10 21 L13 13.500Z" fill="#188818" stroke="#084008" stroke-width=".6"/></svg>
<svg class="a" style="left:1651px;top:924px" width="27" height="27" viewBox="0 0 27 27"><defs><linearGradient id="pb" x1="0" y1="0" x2="0" y2="1"><stop offset="0" stop-color="#F4F4F4"/><stop offset=".5" stop-color="#A8A8A8"/><stop offset="1" stop-color="#606060"/></linearGradient></defs><circle cx="13.500" cy="13.500" r="12.500" fill="url(#pb)" stroke="#505050" stroke-width="1"/><circle cx="13.500" cy="13.500" r="9.500" fill="#9C9C9C" stroke="#787878" stroke-width=".8"/><path d="M9.500 6 L19.500 13.500 L9.500 21Z" fill="#188818" stroke="#084008" stroke-width=".6"/></svg>
<div class="a" style="left:360px;top:958px;width:1320px;height:1px;background:#ACA899"></div><div class="a" style="left:360px;top:959px;width:1320px;height:1px;background:#fff"></div>
<div class="a" style="left:371px;top:960px;width:1309px;height:45px;background:#fff;border:1px solid #8E9398;border-right:none"></div>
<div class="t" style="left:372px;top:964px">刀路重新开始</div>
<div class="t" style="left:372px;top:985px">刀路重新开始</div>
<div class="a" style="left:1664px;top:961px;width:16px;height:43px;background:#F6F5F0"></div>
<svg class="a" style="left:1664px;top:962px" width="16" height="16" viewBox="0 0 16 16"><rect x=".5" y=".5" width="15" height="15" rx="2" fill="#C6D3F5" stroke="#E8EEFC"/><path d="M3.500 10 L7.500 6 L11.500 10" fill="none" stroke="#3A5A9A" stroke-width="2.2"/></svg>
<svg class="a" style="left:1664px;top:987px" width="16" height="16" viewBox="0 0 16 16"><rect x=".5" y=".5" width="15" height="15" rx="2" fill="#C6D3F5" stroke="#E8EEFC"/><path d="M3.500 6.500 L7.500 10.500 L11.500 6.500" fill="none" stroke="#3A5A9A" stroke-width="2.2"/></svg>
<div class="a" style="left:0;top:1020px;width:1680px;height:30px;background:linear-gradient(#3168D5 0,#4993E6 2px,#2663DD 5px,#245EDC 12px,#2258D0 24px,#1941A5 30px)"></div>
<div class="a" style="left:0;top:1020px;width:91px;height:30px;background:linear-gradient(#3C8A3C 0,#5CB85C 3px,#3C9A3C 8px,#2F8A2F 20px,#236A23 30px);border-radius:0 12px 12px 0;box-shadow:2px 0 3px #1A3A8A"></div>
<svg class="a" style="left:11px;top:1025px" width="20" height="20" viewBox="0 0 20 20"><path d="M2 4 C4 2.500 6 2.500 9 4 L8 9 C5.500 7.500 3.500 7.500 1 9Z" fill="#E8502A"/><path d="M10.500 4.500 C13 6 15 6 18 4.500 L17 9.500 C14.500 11 12 11 9.500 9.500Z" fill="#6CB82A"/><path d="M.8 10.500 C3 9 5.500 9 8 10.500 L7 15.500 C4.500 14 2.500 14 0 15.500Z" fill="#3A78E0"/><path d="M9.300 11 C12 12.500 14 12.500 16.800 11 L15.800 16 C13 17.500 11 17.500 8.300 16Z" fill="#F4C428"/></svg>
<div class="t" style="left:36px;top:1024px;font-family:'Liberation Sans','Noto Sans CJK TC',sans-serif;font-style:italic;font-weight:bold;font-size:17px;line-height:22px;height:22px;color:#fff;text-shadow:1px 1px 1px #1A4A1A">開始</div>
<div class="a" style="left:101px;top:1023px;width:157px;height:25px;background:linear-gradient(#5A9AF8 0,#3C81F0 3px,#3A7CEC 20px,#3070E0 25px);border-radius:3px;box-shadow:inset 0 0 0 1px #2A60D0"></div>
<svg class="a" style="left:111px;top:1028px" width="16" height="16" viewBox="0 0 16 16"><rect x="0" y="0" width="16" height="16" fill="#C81818"/><text x="2" y="13" font-family="Liberation Sans" font-weight="bold" font-style="italic" font-size="12" fill="#fff">Fz</text></svg>
<div class="t" style="left:131px;top:1027px;color:#fff;font-family:'Liberation Serif','Noto Sans CJK TC',serif;font-size:12px">FOSTAG@192.1.1.2 -...</div>
<div class="a" style="left:261px;top:1023px;width:157px;height:25px;background:linear-gradient(#5A9AF8 0,#3C81F0 3px,#3A7CEC 20px,#3070E0 25px);border-radius:3px;box-shadow:inset 0 0 0 1px #2A60D0"></div>
<svg class="a" style="left:271px;top:1028px" width="16" height="16" viewBox="0 0 16 16"><path d="M2 1 L14 15 M13 1 L3 15" stroke="#101010" stroke-width="3"/><path d="M3 1 L13 14" stroke="#E8E8E8" stroke-width="1"/></svg>
<div class="t" style="left:291px;top:1027px;color:#fff;font-family:'Liberation Serif','Noto Sans CJK TC',serif;font-size:12px">(總經銷：欣昊 www....</div>
<div class="a" style="left:421px;top:1023px;width:157px;height:25px;background:linear-gradient(#5A9AF8 0,#3C81F0 3px,#3A7CEC 20px,#3070E0 25px);border-radius:3px;box-shadow:inset 0 0 0 1px #2A60D0"></div>
<svg class="a" style="left:431px;top:1028px" width="16" height="16" viewBox="0 0 16 16"><path d="M3 1 L11 1 L14 4 L14 15 L3 15Z" fill="#fff" stroke="#808080"/><circle cx="7" cy="8" r="4.500" fill="none" stroke="#2868D0" stroke-width="2"/><path d="M1 10 C5 4 12 3 15 4" stroke="#2868D0" stroke-width="1.300" fill="none"/></svg>
<div class="t" style="left:451px;top:1027px;color:#fff;font-family:'Liberation Serif','Noto Sans CJK TC',serif;font-size:12px">mastercam X4 chooks ...</div>
<div class="a" style="left:581px;top:1023px;width:157px;height:25px;background:linear-gradient(#5A9AF8 0,#3C81F0 3px,#3A7CEC 20px,#3070E0 25px);border-radius:3px;box-shadow:inset 0 0 0 1px #2A60D0"></div>
<svg class="a" style="left:591px;top:1028px" width="16" height="16" viewBox="0 0 16 16"><path d="M3 1 L11 1 L14 4 L14 15 L3 15Z" fill="#fff" stroke="#808080"/><circle cx="7" cy="8" r="4.500" fill="none" stroke="#2868D0" stroke-width="2"/><path d="M1 10 C5 4 12 3 15 4" stroke="#2868D0" stroke-width="1.300" fill="none"/></svg>
<div class="t" style="left:611px;top:1027px;color:#fff;font-family:'Liberation Serif','Noto Sans CJK TC',serif;font-size:12px">『MasterCAM 技术...</div>
<div class="a" style="left:741px;top:1023px;width:157px;height:25px;background:linear-gradient(#5A9AF8 0,#3C81F0 3px,#3A7CEC 20px,#3070E0 25px);border-radius:3px;box-shadow:inset 0 0 0 1px #2A60D0"></div>
<svg class="a" style="left:751px;top:1028px" width="16" height="16" viewBox="0 0 16 16"><path d="M1 3 L6 3 L7.500 5 L14 5 L14 14 L1 14Z" fill="#E8C858" stroke="#A88020"/><path d="M1 14 L3 7 L16 7 L14 14Z" fill="#FCE890" stroke="#A88020" stroke-width=".8"/></svg>
<div class="t" style="left:771px;top:1027px;color:#fff;font-family:'Liberation Serif','Noto Sans CJK TC',serif;font-size:12px">I:\軟體</div>
<div class="a" style="left:901px;top:1023px;width:157px;height:25px;background:linear-gradient(#1C4FB8,#1E52C0 60%,#2258C8);border-radius:3px;box-shadow:inset 1px 1px 2px #0A2A7A"></div>
<svg class="a" style="left:911px;top:1028px" width="16" height="16" viewBox="0 0 16 16"><rect x=".5" y=".5" width="15" height="15" rx="2.500" fill="#58B0F0" stroke="#B8E0FC"/><path d="M2.500 3.500 H8 V5.500 H5.800 L8 10.500 L11 3.500 H13.300 L8.800 13 H7Z" fill="#fff"/></svg>
<div class="t" style="left:931px;top:1027px;color:#fff;font-family:'Liberation Serif','Noto Sans CJK TC',serif;font-size:12px">VERICUT 7.0 by CG...</div>
<div class="a" style="left:1543px;top:1020px;width:137px;height:30px;background:linear-gradient(#1A8CE8 0,#22A0F0 3px,#1290E8 10px,#1088E0 24px,#0C6CC0 30px);border-left:1px solid #0A3A9A"></div>
<div class="a" style="left:1328px;top:1023px;width:169px;height:25px;background:linear-gradient(#5A6478 0,#2A3040 4px,#10141C 14px,#2A3040 25px);border:1px solid #8A94A8;border-radius:3px"></div>
<svg class="a" style="left:1328px;top:1023px" width="218" height="25" viewBox="0 0 218 25"><circle cx="12" cy="12.500" r="7" fill="#E8F0FC" stroke="#6090E0" stroke-width="1.500"/><path d="M10 9 L15.500 12.500 L10 16Z" fill="#2868D0"/><rect x="22" y="4" width="128" height="17" rx="8.500" fill="#181C24" stroke="#70788A" stroke-width=".8"/><rect x="35" y="9" width="6" height="6" fill="#fff"/><rect x="48" y="5" width="24" height="15" rx="7" fill="#303848" stroke="#8890A0" stroke-width=".6"/><path d="M55 8.500 V16.500 M64 8.500 L57 12.500 L64 16.500Z" stroke="#fff" stroke-width="1.500" fill="#fff"/><circle cx="83" cy="12.500" r="10.500" fill="#2050C0" stroke="#B8D0FF" stroke-width="1.500"/><rect x="79" y="7.500" width="2.800" height="10" fill="#fff"/><rect x="84.500" y="7.500" width="2.800" height="10" fill="#fff"/><rect x="95" y="5" width="24" height="15" rx="7" fill="#303848" stroke="#8890A0" stroke-width=".6"/><path d="M112 8.500 V16.500 M103 8.500 L110 12.500 L103 16.500Z" stroke="#fff" stroke-width="1.500" fill="#fff"/><path d="M124 10.500 H127 L130 8 V17 L127 14.500 H124Z" fill="#fff"/></svg>
<svg class="a" style="left:1500px;top:1024px" width="180" height="24" viewBox="0 0 180 24"><circle cx="48" cy="12" r="7" fill="#E8F0FF" opacity=".8"/><circle cx="68" cy="12" r="7" fill="#1838B0"/><rect x="84" y="5" width="12" height="13" fill="#404858"/><rect x="104" y="5" width="12" height="13" fill="#505868"/><text x="142" y="17" font-family="Liberation Sans" font-size="12" fill="#fff">24:28</text></svg>
<div class="t" style="left:1458px;top:1026px;height:22px;line-height:22px;font-family:'Liberation Sans','Noto Sans CJK SC',sans-serif;font-weight:bold;font-size:16px;color:#E81818;letter-spacing:1.75px;text-shadow:-1px -1px 0 #fff,1px -1px 0 #fff,-1px 1px 0 #fff,1px 1px 0 #fff,0 -1px 0 #fff,0 1px 0 #fff,-1px 0 0 #fff,1px 0 0 #fff"><span style="font-size:17px;letter-spacing:0">三维网</span>www.3dportal.cn</div>
</body></html>
